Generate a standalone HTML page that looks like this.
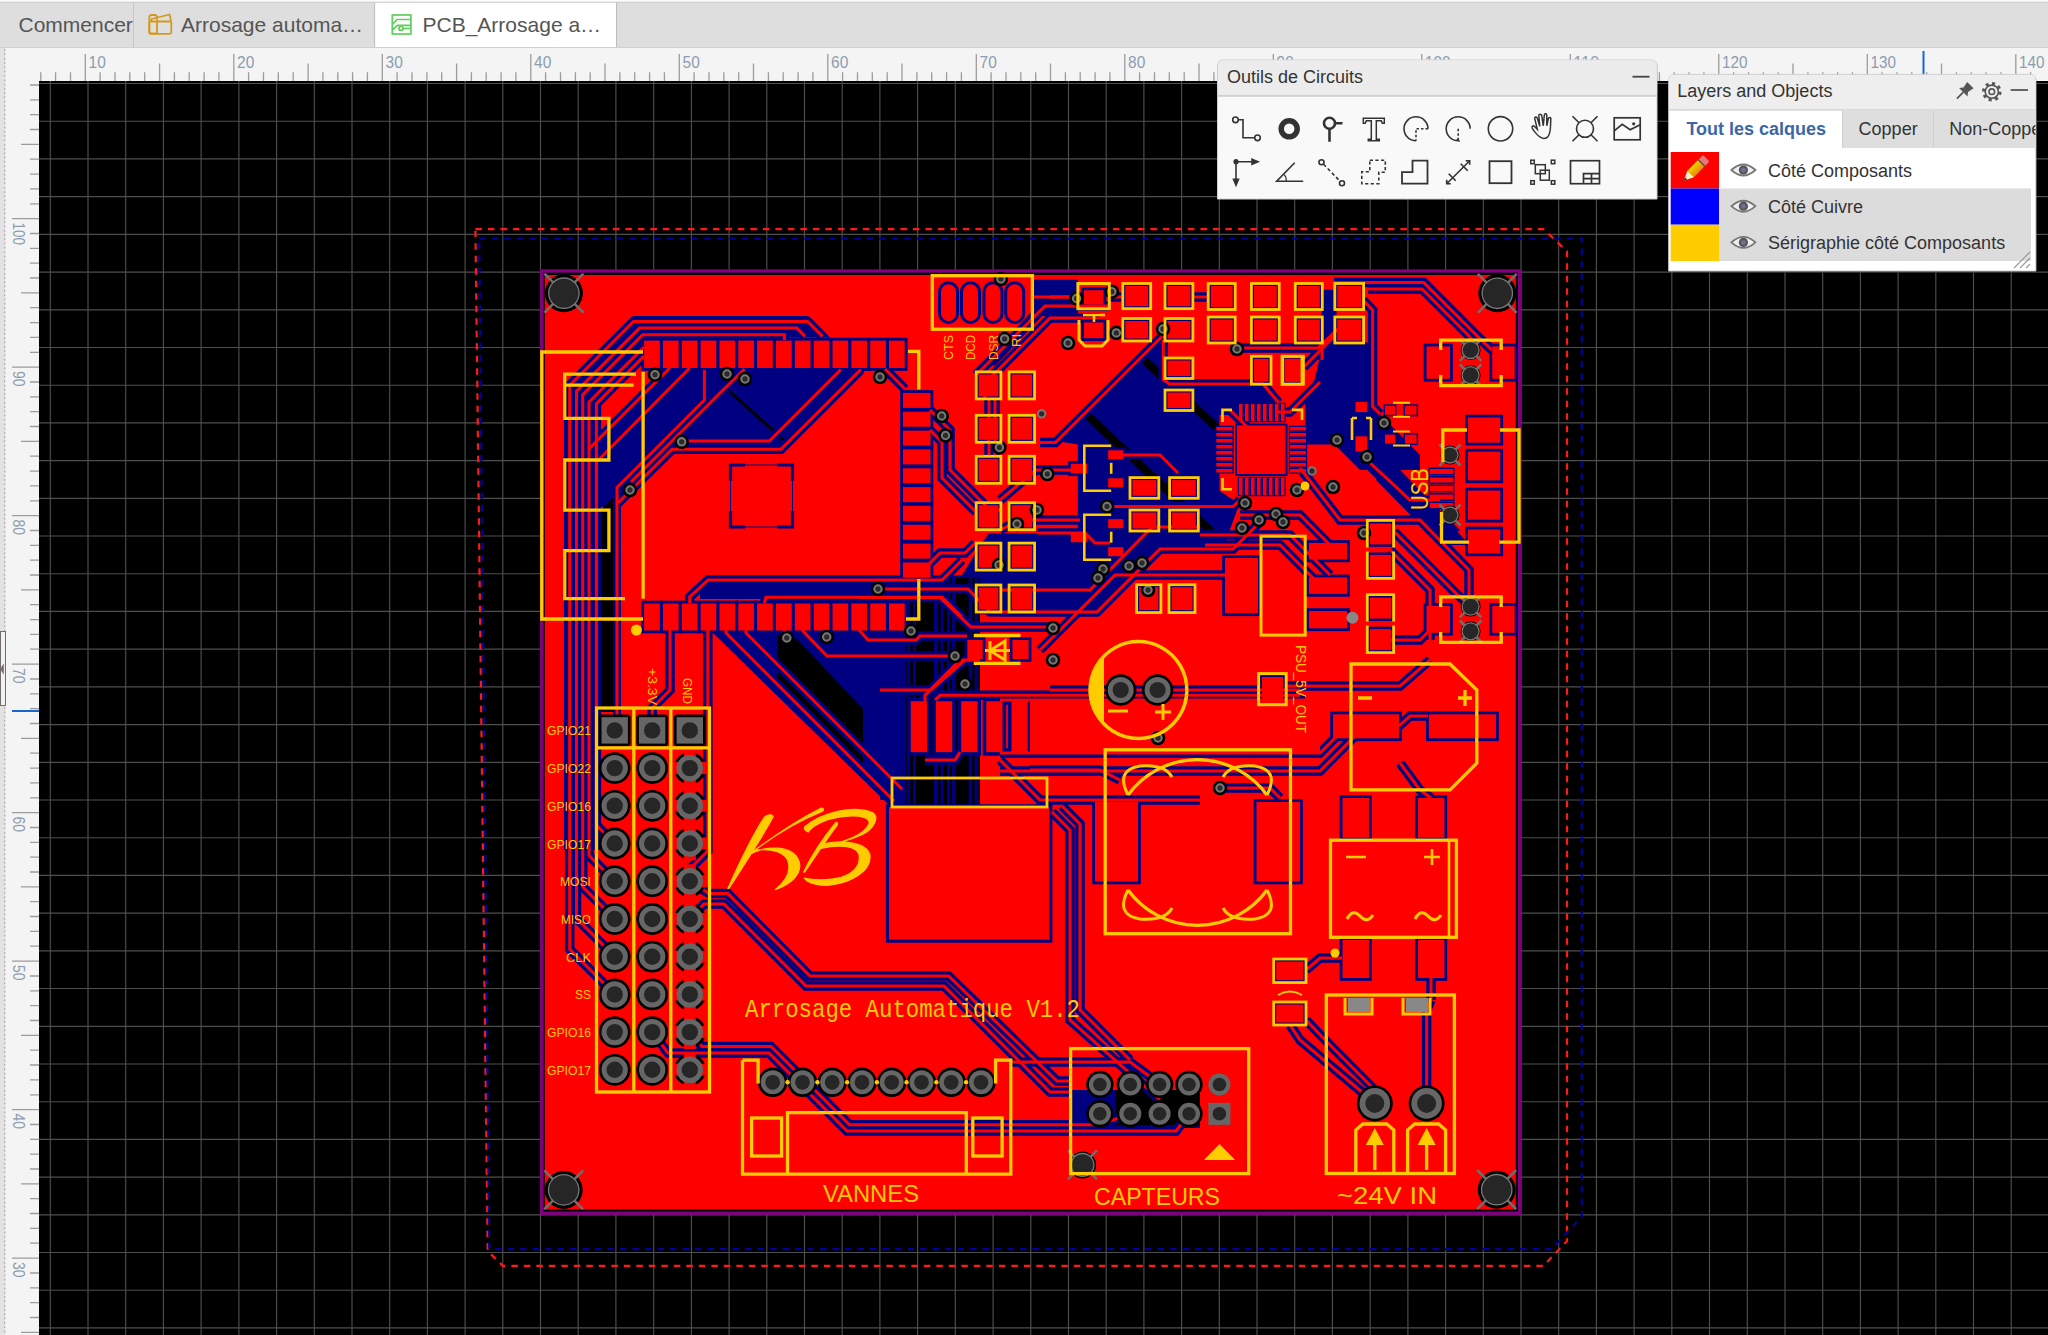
<!DOCTYPE html>
<html><head><meta charset="utf-8"><style>
*{margin:0;padding:0}
html,body{width:2048px;height:1335px;overflow:hidden;background:#f4f4f4}
svg{position:absolute;left:0;top:0;display:block}
</style></head><body>
<svg width="2048" height="1335" viewBox="0 0 2048 1335">
<rect x="39" y="81" width="2009" height="1254" fill="#000"/><path d="M50.3 81V1335M88 81V1335M125.7 81V1335M163.4 81V1335M201.1 81V1335M238.9 81V1335M276.6 81V1335M314.3 81V1335M352 81V1335M389.7 81V1335M427.4 81V1335M465.1 81V1335M502.8 81V1335M540.5 81V1335M578.2 81V1335M615.9 81V1335M653.7 81V1335M691.4 81V1335M729.1 81V1335M766.8 81V1335M804.5 81V1335M842.2 81V1335M879.9 81V1335M917.6 81V1335M955.3 81V1335M993.1 81V1335M1030.8 81V1335M1068.5 81V1335M1106.2 81V1335M1143.9 81V1335M1181.6 81V1335M1219.3 81V1335M1257 81V1335M1294.7 81V1335M1332.4 81V1335M1370.2 81V1335M1407.9 81V1335M1445.6 81V1335M1483.3 81V1335M1521 81V1335M1558.7 81V1335M1596.4 81V1335M1634.1 81V1335M1671.8 81V1335M1709.5 81V1335M1747.3 81V1335M1785 81V1335M1822.7 81V1335M1860.4 81V1335M1898.1 81V1335M1935.8 81V1335M1973.5 81V1335M2011.2 81V1335M39 83.5H2048M39 121.2H2048M39 158.9H2048M39 196.6H2048M39 234.3H2048M39 272.1H2048M39 309.8H2048M39 347.5H2048M39 385.2H2048M39 422.9H2048M39 460.6H2048M39 498.3H2048M39 536H2048M39 573.7H2048M39 611.4H2048M39 649.1H2048M39 686.9H2048M39 724.6H2048M39 762.3H2048M39 800H2048M39 837.7H2048M39 875.4H2048M39 913.1H2048M39 950.8H2048M39 988.5H2048M39 1026.3H2048M39 1064H2048M39 1101.7H2048M39 1139.4H2048M39 1177.1H2048M39 1214.8H2048M39 1252.5H2048M39 1290.2H2048M39 1327.9H2048" stroke="#4e4e4e" stroke-width="1.15" fill="none"/><path d="M475.4 229.1H1543.5L1567 251.3V1241L1543.4 1265.9H502.9L487.7 1251.2Z" stroke="#ff1a1a" stroke-width="2.2" fill="none" stroke-dasharray="6.5 6"/><path d="M479.2 238.6H1581.8V1216.6L1551.5 1249.1H489.3Z" stroke="#00009a" stroke-width="2.2" fill="none" stroke-dasharray="6.5 6"/><rect x="541.7" y="271" width="977.9" height="942.2" fill="#000" stroke="#800080" stroke-width="3.3"/><rect x="544.8" y="275" width="971" height="934.5" fill="#ff0000"/><polygon points="633,316 808,316 830,337.5 641,337.5 641,345 588,398 588,850 563.9,850 563.9,388" fill="#000080"/><polygon points="662,369.6 866,369.6 781,453 672,453 618,507 600,507 600,850 585,850 585,447" fill="#000080"/><polygon points="700,581 882,581 882,599 700,599" fill="#000080"/><polygon points="1032,282 1078,282 1078,302 1032,302" fill="#000080"/><polygon points="1161.5,337.1 1161.5,383.9 1263,383.9 1275.5,398.4 1275.5,414.9 1219.5,414.9 1219.5,490.7 1239.3,503.9 1226.1,540.2 1236,546.8 1163.5,546.8 1097.5,614.3 945.9,614.3 939.3,576.4 959.1,573.1 988.8,533.6 1077.8,533.6 1077.8,444.6 1058,441.3" fill="#000080"/><polygon points="1320,342.4 1323.3,289.7 1336.5,289.7 1336.5,342.4 1374.4,342.4 1374.4,444.6 1460.1,530.3 1440.4,540.2 1357.9,461.1 1341.5,444.6 1305.2,444.6 1305.2,398.4 1320,368.8" fill="#000080"/><polygon points="1033.3,279.8 1077.8,279.8 1077.8,306.1 1051.4,306.1 995.4,365.5 985.5,365.5 988.8,358.9 1033.3,309.4" fill="#000080"/><polygon points="1040,283 1078,283 1078,316 1040,316" fill="#000080"/><polygon points="1323,343 1376,343 1376,410 1420,455 1420,470 1360,470 1320,430 1310,400" fill="#000080"/><polygon points="1376,450 1400,470 1470,545 1440,545 1376,480" fill="#000080"/><polygon points="880,596 907,596 907,800 880,800" fill="#000080"/><polygon points="713,633 906,633 906,808 890.4,806.5" fill="#000080"/><polygon points="1072,1090 1200,1090 1200,1128 1072,1128" fill="#000080"/><polygon points="598.5,512 614,497 614,712 598.5,712" fill="#000"/><path d="M728 390L788 444" stroke="#000" stroke-width="3"/><polygon points="1137.1,358.9 1143.7,353.9 1219.5,424.8 1212.9,429.8" fill="#000"/><polygon points="1084.4,418.2 1091,413.3 1219.5,533.6 1212.9,538.5" fill="#000"/><polygon points="906,578 980,578 980,808 906,808" fill="#000"/><path d="M908.5 578V808" stroke="#000080" stroke-width="3.5"/><path d="M914.5 578V808" stroke="#000080" stroke-width="3"/><path d="M936 578V808" stroke="#000080" stroke-width="4"/><path d="M942 578V808" stroke="#000080" stroke-width="3"/><path d="M948.5 578V808" stroke="#000080" stroke-width="3"/><path d="M953.5 578V808" stroke="#000080" stroke-width="3"/><path d="M970.5 578V808" stroke="#000080" stroke-width="3.5"/><path d="M976.5 578V808" stroke="#000080" stroke-width="3.5"/><polygon points="777.4,635 796.9,639 863,709 863,771.4 777.4,685.7" fill="#000"/><polygon points="1115,1090 1200,1090 1200,1125 1115,1125" fill="#000"/><polyline points="735,910 812,987 940,987" fill="none" stroke="#000" stroke-width="3"/><polygon points="933,540 975,540 990,530 962,575 933,577" fill="#ff0000"/><g fill="#000080" stroke="#000080"><polyline points="614.7,994.3 569.7,949.3 569.7,385.3 633.5,321.5 807.6,321.5 822.5,336.4" fill="none" stroke-width="9.5"/><polyline points="614.7,956.6 576.5,918.4 576.5,391.1 639.5,328.1 796.8,328.1 805,336.4" fill="none" stroke-width="9.5"/><polyline points="614.7,918.9 582.7,886.9 582.7,394.6 642.6,334.7 784.4,334.7 784.4,340" fill="none" stroke-width="9.5"/><polyline points="614.7,881.2 589,855.5 589,402 644,347" fill="none" stroke-width="9.5"/><polyline points="614.7,843.5 596.4,825.2 596.4,403.6 644,356" fill="none" stroke-width="9.5"/><polyline points="669.8,368 590,447.8 589,449" fill="none" stroke-width="9.5"/><polyline points="689.7,368 596.4,462 596.4,470" fill="none" stroke-width="9.5"/><polyline points="704.4,370 704.4,400 617,487.5 617,716 614.7,730.4" fill="none" stroke-width="8"/><rect x="641.3" y="337.8" width="21.3" height="33" stroke="none"/><rect x="641.3" y="600.7" width="21.3" height="32.6" stroke="none"/><rect x="660.1" y="337.8" width="21.3" height="33" stroke="none"/><rect x="660.1" y="600.7" width="21.3" height="32.6" stroke="none"/><rect x="679" y="337.8" width="21.3" height="33" stroke="none"/><rect x="679" y="600.7" width="21.3" height="32.6" stroke="none"/><rect x="697.8" y="337.8" width="21.3" height="33" stroke="none"/><rect x="697.8" y="600.7" width="21.3" height="32.6" stroke="none"/><rect x="716.7" y="337.8" width="21.3" height="33" stroke="none"/><rect x="716.7" y="600.7" width="21.3" height="32.6" stroke="none"/><rect x="735.5" y="337.8" width="21.3" height="33" stroke="none"/><rect x="735.5" y="600.7" width="21.3" height="32.6" stroke="none"/><rect x="754.3" y="337.8" width="21.3" height="33" stroke="none"/><rect x="754.3" y="600.7" width="21.3" height="32.6" stroke="none"/><rect x="773.2" y="337.8" width="21.3" height="33" stroke="none"/><rect x="773.2" y="600.7" width="21.3" height="32.6" stroke="none"/><rect x="792" y="337.8" width="21.3" height="33" stroke="none"/><rect x="792" y="600.7" width="21.3" height="32.6" stroke="none"/><rect x="810.9" y="337.8" width="21.3" height="33" stroke="none"/><rect x="810.9" y="600.7" width="21.3" height="32.6" stroke="none"/><rect x="829.7" y="337.8" width="21.3" height="33" stroke="none"/><rect x="829.7" y="600.7" width="21.3" height="32.6" stroke="none"/><rect x="848.5" y="337.8" width="21.3" height="33" stroke="none"/><rect x="848.5" y="600.7" width="21.3" height="32.6" stroke="none"/><rect x="867.4" y="337.8" width="21.3" height="33" stroke="none"/><rect x="867.4" y="600.7" width="21.3" height="32.6" stroke="none"/><rect x="886.2" y="337.8" width="21.3" height="33" stroke="none"/><rect x="886.2" y="600.7" width="21.3" height="32.6" stroke="none"/><rect x="900.2" y="390.1" width="33.1" height="20.6" stroke="none"/><rect x="900.2" y="408.9" width="33.1" height="20.6" stroke="none"/><rect x="900.2" y="427.8" width="33.1" height="20.6" stroke="none"/><rect x="900.2" y="446.6" width="33.1" height="20.6" stroke="none"/><rect x="900.2" y="465.5" width="33.1" height="20.6" stroke="none"/><rect x="900.2" y="484.3" width="33.1" height="20.6" stroke="none"/><rect x="900.2" y="503.1" width="33.1" height="20.6" stroke="none"/><rect x="900.2" y="522" width="33.1" height="20.6" stroke="none"/><rect x="900.2" y="540.8" width="33.1" height="20.6" stroke="none"/><rect x="900.2" y="559.7" width="33.1" height="20.6" stroke="none"/><polyline points="744.5,369 720,393 631,482" fill="none" stroke-width="9.5"/><polyline points="840.8,369.6 769.4,441 682,441" fill="none" stroke-width="9.5"/><polyline points="860.7,369.6 781,449.3 672,449.3 618,503" fill="none" stroke-width="9.5"/><polyline points="885,369 905,389" fill="none" stroke-width="9.5"/><path d="M730.5 481V465H745M777 465H792.5V481M792.5 511V527H777M745 527H730.5V511" fill="none" stroke-width="3.2"/><path d="M730.5 465V527M792.5 465V527M730.5 465H792.5M730.5 527H792.5" fill="none" stroke-width="1"/><polyline points="670,630 670,690 652.2,708 652.2,730.4" fill="none" stroke-width="9.5"/><polyline points="707.8,630 707.8,851 689.8,869 689.8,881.2" fill="none" stroke-width="9.5"/><polyline points="689.7,603 689.7,597 708,580 942,580 962,560" fill="none" stroke-width="9.5"/><polyline points="764.4,603 766,597.3 942,597.3 962,617" fill="none" stroke-width="9.5"/><rect x="938.0" y="281.2" width="21" height="42.7" rx="10.5" stroke="none"/><rect x="960.0" y="281.2" width="21" height="42.7" rx="10.5" stroke="none"/><rect x="982.5" y="281.2" width="21" height="42.7" rx="10.5" stroke="none"/><rect x="1004.2" y="281.2" width="21" height="42.7" rx="10.5" stroke="none"/><polyline points="1032,297 1060,297 1078,297" fill="none" stroke-width="9.5"/><polyline points="1100,318 1050,318 985,383 985,400" fill="none" stroke-width="9.5"/><polyline points="1110,306 1045,306 976,375" fill="none" stroke-width="9.5"/><rect x="976.5" y="372.2" width="24.1" height="26.4" stroke="none"/><rect x="1009.4" y="372.2" width="24.9" height="26.4" stroke="none"/><rect x="976.5" y="415.6" width="24.1" height="26.4" stroke="none"/><rect x="1009.4" y="415.6" width="24.9" height="26.4" stroke="none"/><rect x="976.5" y="456.6" width="24.1" height="26.4" stroke="none"/><rect x="1009.4" y="456.6" width="24.9" height="26.4" stroke="none"/><rect x="976.5" y="503" width="24.1" height="26.4" stroke="none"/><rect x="1009.4" y="503" width="24.9" height="26.4" stroke="none"/><rect x="976.5" y="543.4" width="24.1" height="26.4" stroke="none"/><rect x="1009.4" y="543.4" width="24.9" height="26.4" stroke="none"/><rect x="976.5" y="585.3" width="24.1" height="26.4" stroke="none"/><rect x="1009.4" y="585.3" width="24.9" height="26.4" stroke="none"/><polyline points="989,399 989,456" fill="none" stroke-width="9.5"/><polyline points="995,399 995,456" fill="none" stroke-width="9.5"/><polyline points="930,410 950,430 950,470 990,510 1000,510" fill="none" stroke-width="9.5"/><polyline points="930,430 942,442 942,478 976,512" fill="none" stroke-width="9.5"/><polyline points="918,575 940,553 965,553 975,543" fill="none" stroke-width="9.5"/><polyline points="1161.5,337 1055.4,442.6 1040,442.6" fill="none" stroke-width="9.5"/><polyline points="1163.3,340 1163.3,379.4 1169.4,384 1263,384 1278.6,402.8" fill="none" stroke-width="9.5"/><polyline points="1000,500 1036,470 1080,470" fill="none" stroke-width="9.5"/><polyline points="1000,530 1020,520 1080,520" fill="none" stroke-width="9.5"/><polyline points="1037,533 1085,533 1095,543 1110,543" fill="none" stroke-width="9.5"/><polyline points="1123,455 1160,455 1178,473" fill="none" stroke-width="9.5"/><polyline points="1107,506.5 1233,506.5 1240,500" fill="none" stroke-width="9.5"/><polyline points="1000,612 1097,612 1160,549 1233,549 1260,522" fill="none" stroke-width="9.5"/><polyline points="1000,590 1090,590 1152,527 1200,527" fill="none" stroke-width="9.5"/><polyline points="1052,627 971,627 940,597.6 860,597.6" fill="none" stroke-width="9.5"/><polyline points="878,589 968,589 990,611.7 1000,612" fill="none" stroke-width="9.5"/><polyline points="1040,650 1115,575 1230,575 1240,565 1258,565" fill="none" stroke-width="9.5"/><rect x="1068" y="461" width="22.1" height="15.1" stroke="none"/><rect x="1105.4" y="447.5" width="20.6" height="14.6" stroke="none"/><rect x="1105.4" y="475.5" width="20.6" height="14.6" stroke="none"/><rect x="1068" y="529.9" width="22.1" height="15.1" stroke="none"/><rect x="1105.4" y="516.4" width="20.6" height="14.6" stroke="none"/><rect x="1105.4" y="544.4" width="20.6" height="14.6" stroke="none"/><rect x="1130.3" y="477.9" width="28.2" height="20.1" stroke="none"/><rect x="1169.9" y="477.9" width="28.1" height="20.1" stroke="none"/><rect x="1130.3" y="510.3" width="28.2" height="20.4" stroke="none"/><rect x="1169.9" y="510.3" width="28.1" height="20.4" stroke="none"/><rect x="1136.9" y="585" width="23.7" height="27.3" stroke="none"/><rect x="1169.3" y="585" width="25.4" height="27.3" stroke="none"/><rect x="1235" y="423.5" width="52.5" height="52.5" stroke="none"/><rect x="1237.8" y="402.8" width="5.9" height="19.4" stroke="none"/><rect x="1237.8" y="476.8" width="5.9" height="19.4" stroke="none"/><rect x="1215.1" y="425.8" width="18.6" height="5.9" stroke="none"/><rect x="1288.8" y="425.8" width="18.4" height="5.9" stroke="none"/><rect x="1243.8" y="402.8" width="5.9" height="19.4" stroke="none"/><rect x="1243.8" y="476.8" width="5.9" height="19.4" stroke="none"/><rect x="1215.1" y="431.8" width="18.6" height="5.9" stroke="none"/><rect x="1288.8" y="431.8" width="18.4" height="5.9" stroke="none"/><rect x="1249.8" y="402.8" width="5.9" height="19.4" stroke="none"/><rect x="1249.8" y="476.8" width="5.9" height="19.4" stroke="none"/><rect x="1215.1" y="437.8" width="18.6" height="5.9" stroke="none"/><rect x="1288.8" y="437.8" width="18.4" height="5.9" stroke="none"/><rect x="1255.8" y="402.8" width="5.9" height="19.4" stroke="none"/><rect x="1255.8" y="476.8" width="5.9" height="19.4" stroke="none"/><rect x="1215.1" y="443.8" width="18.6" height="5.9" stroke="none"/><rect x="1288.8" y="443.8" width="18.4" height="5.9" stroke="none"/><rect x="1261.8" y="402.8" width="5.9" height="19.4" stroke="none"/><rect x="1261.8" y="476.8" width="5.9" height="19.4" stroke="none"/><rect x="1215.1" y="449.8" width="18.6" height="5.9" stroke="none"/><rect x="1288.8" y="449.8" width="18.4" height="5.9" stroke="none"/><rect x="1267.8" y="402.8" width="5.9" height="19.4" stroke="none"/><rect x="1267.8" y="476.8" width="5.9" height="19.4" stroke="none"/><rect x="1215.1" y="455.8" width="18.6" height="5.9" stroke="none"/><rect x="1288.8" y="455.8" width="18.4" height="5.9" stroke="none"/><rect x="1273.8" y="402.8" width="5.9" height="19.4" stroke="none"/><rect x="1273.8" y="476.8" width="5.9" height="19.4" stroke="none"/><rect x="1215.1" y="461.8" width="18.6" height="5.9" stroke="none"/><rect x="1288.8" y="461.8" width="18.4" height="5.9" stroke="none"/><rect x="1279.8" y="402.8" width="5.9" height="19.4" stroke="none"/><rect x="1279.8" y="476.8" width="5.9" height="19.4" stroke="none"/><rect x="1215.1" y="467.8" width="18.6" height="5.9" stroke="none"/><rect x="1288.8" y="467.8" width="18.4" height="5.9" stroke="none"/><rect x="1081.2" y="287.4" width="25.1" height="19.9" stroke="none"/><rect x="1081.2" y="319.6" width="25.1" height="21.4" stroke="none"/><rect x="1123.1" y="283.8" width="27.3" height="24.6" stroke="none"/><rect x="1123.1" y="318.8" width="27.3" height="21.9" stroke="none"/><rect x="1165.3" y="283.8" width="27.3" height="24.6" stroke="none"/><rect x="1165.3" y="318.8" width="27.3" height="21.9" stroke="none"/><rect x="1208.5" y="283.8" width="26.4" height="25.4" stroke="none"/><rect x="1208.5" y="317.3" width="26.4" height="25.4" stroke="none"/><rect x="1251.7" y="283.8" width="27.2" height="25.4" stroke="none"/><rect x="1251.7" y="317.3" width="27.2" height="25.4" stroke="none"/><rect x="1295.6" y="283.8" width="26.4" height="25.4" stroke="none"/><rect x="1295.6" y="317.3" width="26.4" height="25.4" stroke="none"/><rect x="1335.1" y="283.8" width="28.2" height="25.4" stroke="none"/><rect x="1335.1" y="317.3" width="28.2" height="25.4" stroke="none"/><rect x="1165.3" y="358.3" width="27.3" height="19.9" stroke="none"/><rect x="1165.3" y="390.3" width="27.3" height="19.9" stroke="none"/><rect x="1251.7" y="356.6" width="19" height="27.3" stroke="none"/><rect x="1282.3" y="356.6" width="19.4" height="27.3" stroke="none"/><rect x="1283" y="356.6" width="20.1" height="27.3" stroke="none"/><polyline points="1050,297 1078,297" fill="none" stroke-width="9.5"/><polyline points="1109,297 1122,297" fill="none" stroke-width="9.5"/><polyline points="1193,297 1208,297" fill="none" stroke-width="9.5"/><polyline points="1334,282.6 1423.8,282.6 1479.6,338.3 1492,350" fill="none" stroke-width="9.5"/><polyline points="1368,289 1422,289 1470,337" fill="none" stroke-width="9.5"/><polyline points="1363,300 1372.6,310 1372.6,406.6 1380,414" fill="none" stroke-width="9.5"/><polyline points="1237.3,348.1 1317.8,348.1 1335,332" fill="none" stroke-width="9.5"/><polyline points="1303.8,367 1335,335.6" fill="none" stroke-width="9.5"/><polyline points="1322,360 1322,345 1340,327" fill="none" stroke-width="9.5"/><polyline points="1320,382 1290,412 1275,412" fill="none" stroke-width="9.5"/><polyline points="1230,410 1260,440" fill="none" stroke-width="9.5"/><rect x="1423.7" y="343.6" width="29.1" height="38" stroke="none"/><rect x="1489.4" y="343.6" width="28.1" height="38" stroke="none"/><rect x="1423.7" y="603" width="29.1" height="32.6" stroke="none"/><rect x="1489.4" y="603" width="28.1" height="32.6" stroke="none"/><rect x="1465.2" y="414.7" width="37.9" height="30.8" stroke="none"/><rect x="1465.2" y="448.8" width="37.9" height="34.4" stroke="none"/><rect x="1465.2" y="487.7" width="37.9" height="34.8" stroke="none"/><rect x="1465.2" y="526.6" width="37.9" height="29.6" stroke="none"/><rect x="1428.5" y="467.5" width="26" height="8" stroke="none"/><rect x="1428.5" y="476" width="26" height="8" stroke="none"/><rect x="1428.5" y="484.5" width="26" height="8" stroke="none"/><rect x="1428.5" y="493" width="26" height="8" stroke="none"/><rect x="1428.5" y="501.5" width="26" height="8" stroke="none"/><rect x="1383.5" y="404.3" width="13" height="12" stroke="none"/><rect x="1403.5" y="404.3" width="14.6" height="12" stroke="none"/><rect x="1383.5" y="433.1" width="13" height="12" stroke="none"/><rect x="1403.5" y="433.1" width="14.6" height="12" stroke="none"/><rect x="1352.7" y="399.2" width="17.3" height="15.6" stroke="none"/><rect x="1352.7" y="433.5" width="17.3" height="20.9" stroke="none"/><polyline points="1300,468 1340,520 1420,520 1469,570 1469,605" fill="none" stroke-width="9.5"/><polyline points="1394.3,531.7 1455.7,593.1 1470,606" fill="none" stroke-width="9.5"/><polyline points="1390,550 1430,590 1430,640" fill="none" stroke-width="9.5"/><polyline points="1390,640 1420,640 1440,620" fill="none" stroke-width="9.5"/><polyline points="1367,460 1410,500 1440,500" fill="none" stroke-width="9.5"/><rect x="1306.1" y="540.1" width="43.8" height="22.1" stroke="none"/><rect x="1306.1" y="574.6" width="43.8" height="22.1" stroke="none"/><rect x="1306.1" y="608.2" width="43.8" height="22.9" stroke="none"/><rect x="1222.2" y="555.1" width="38.6" height="61" stroke="none"/><rect x="1367.6" y="521" width="25.8" height="25.8" stroke="none"/><rect x="1367.6" y="552.5" width="25.8" height="25.8" stroke="none"/><rect x="1367.6" y="595.2" width="25.8" height="25.8" stroke="none"/><rect x="1367.6" y="626.7" width="25.8" height="25.8" stroke="none"/><polyline points="1240,515 1300,515 1330,545" fill="none" stroke-width="9.5"/><polyline points="1200,535 1290,535 1330,575" fill="none" stroke-width="9.5"/><polyline points="1205,545 1280,545 1320,585" fill="none" stroke-width="9.5"/><rect x="964.6" y="637.2" width="20.9" height="24.6" stroke="none"/><rect x="1009.6" y="637.2" width="21.8" height="24.6" stroke="none"/><polyline points="859,630 868,640 916,640 920,636 967,636" fill="none" stroke-width="9.5"/><polyline points="802,630 827,656 957,656" fill="none" stroke-width="9.5"/><polyline points="784,630 787,638" fill="none" stroke-width="9.5"/><polyline points="880,690 930,690 960,660 980,660" fill="none" stroke-width="9.5"/><polyline points="925,702 925,695 965,660" fill="none" stroke-width="9.5"/><rect x="907.2" y="697.6" width="23.4" height="58.1" stroke="none"/><rect x="932.4" y="697.6" width="23.4" height="58.1" stroke="none"/><rect x="957.6" y="697.6" width="23.4" height="58.1" stroke="none"/><rect x="982.7" y="697.6" width="23.4" height="58.1" stroke="none"/><rect x="1007.9" y="697.6" width="23.4" height="58.1" stroke="none"/><rect x="1030" y="701.2" width="290" height="50.9" stroke="none"/><polyline points="935,700 940,695.3 1300,695.3" fill="none" stroke-width="9.5"/><polyline points="925,760 955,760 960,752" fill="none" stroke-width="9.5"/><polyline points="1000,760 1040,800 1200,800" fill="none" stroke-width="9.5"/><polyline points="1030,770 1100,770 1120,780" fill="none" stroke-width="9.5"/><rect x="885.9" y="804.2" width="166.5" height="138.5" stroke="none"/><polyline points="1052,812 1070,830 1070,1020 1160,1100" fill="none" stroke-width="9.5"/><polyline points="1062,806 1080,824 1080,1010 1130,1060" fill="none" stroke-width="9.5"/><polyline points="726,630 726,633 894,801" fill="none" stroke-width="9.5"/><polyline points="746,630 746,633 902,789" fill="none" stroke-width="9.5"/><polyline points="1050,690 1260,690 1300,690" fill="none" stroke-width="9.5"/><polyline points="1000,700 1305,700" fill="none" stroke-width="9.5"/><rect x="1259.2" y="674.2" width="26.6" height="30.6" stroke="none"/><polyline points="1286,686 1400,686 1430,660" fill="none" stroke-width="9.5"/><rect x="1092.2" y="799.2" width="48.6" height="85.1" stroke="none"/><rect x="1253.7" y="799.2" width="49.1" height="85.1" stroke="none"/><polyline points="1000,753 1320,753 1350,723" fill="none" stroke-width="9.5"/><polyline points="1000,771 1320,771 1360,731" fill="none" stroke-width="9.5"/><polyline points="1220,788 1270,788 1280,798" fill="none" stroke-width="9.5"/><rect x="1330.2" y="711.5" width="71.6" height="29.6" stroke="none"/><rect x="1426" y="711.5" width="72.8" height="29.6" stroke="none"/><polyline points="1399,726 1410,716 1428,716" fill="none" stroke-width="9.5"/><rect x="1339.7" y="795.2" width="32.1" height="45.4" stroke="none"/><rect x="1415.2" y="795.2" width="32" height="45.4" stroke="none"/><rect x="1339.7" y="937.2" width="32.1" height="43.6" stroke="none"/><rect x="1415.2" y="937.2" width="32" height="43.6" stroke="none"/><polyline points="1400,763 1420,790 1431,798" fill="none" stroke-width="9.5"/><rect x="1274" y="959.3" width="31.7" height="23" stroke="none"/><rect x="1274" y="1002.3" width="31.7" height="22.4" stroke="none"/><polyline points="1306,970 1320,958 1342,958" fill="none" stroke-width="9.5"/><polyline points="1290,1025 1300,1040 1375,1103" fill="none" stroke-width="9.5"/><polyline points="1431,978 1431,1000" fill="none" stroke-width="9.5"/><polyline points="1306,1020 1330,1045 1374.8,1090" fill="none" stroke-width="9.5"/><polyline points="1426.6,1090 1426.6,1010 1431,1000" fill="none" stroke-width="9.5"/><polyline points="689.8,881.2 709,893.6 727.8,893.6 810,976 948.6,976 1057,1081 1072,1081" fill="none" stroke-width="9.5"/><polyline points="689.8,918.9 704,904 724,904 806,986 944,986 1050,1092 1072,1092" fill="none" stroke-width="9.5"/><polyline points="689.8,1032 702,1046.5 771,1046.5 849.4,1124.7 1100,1124.7 1130,1113.8" fill="none" stroke-width="9.5"/><polyline points="652.2,1032 668,1053 769,1053 847,1131 1176,1131 1189,1113.8" fill="none" stroke-width="9.5"/><polyline points="1012,1062 1130,1062 1160,1084" fill="none" stroke-width="9.5"/></g><g fill="#ff0000" stroke="#ff0000"><polyline points="614.7,994.3 569.7,949.3 569.7,385.3 633.5,321.5 807.6,321.5 822.5,336.4" fill="none" stroke-width="3.0"/><polyline points="614.7,956.6 576.5,918.4 576.5,391.1 639.5,328.1 796.8,328.1 805,336.4" fill="none" stroke-width="3.0"/><polyline points="614.7,918.9 582.7,886.9 582.7,394.6 642.6,334.7 784.4,334.7 784.4,340" fill="none" stroke-width="3.0"/><polyline points="614.7,881.2 589,855.5 589,402 644,347" fill="none" stroke-width="3.0"/><polyline points="614.7,843.5 596.4,825.2 596.4,403.6 644,356" fill="none" stroke-width="3.0"/><polyline points="669.8,368 590,447.8 589,449" fill="none" stroke-width="3.0"/><polyline points="689.7,368 596.4,462 596.4,470" fill="none" stroke-width="3.0"/><polyline points="704.4,370 704.4,400 617,487.5 617,716 614.7,730.4" fill="none" stroke-width="3.0"/><rect x="644.1" y="340.6" width="15.7" height="27.4" stroke="none"/><rect x="644.1" y="603.5" width="15.7" height="27" stroke="none"/><rect x="662.9" y="340.6" width="15.7" height="27.4" stroke="none"/><rect x="662.9" y="603.5" width="15.7" height="27" stroke="none"/><rect x="681.8" y="340.6" width="15.7" height="27.4" stroke="none"/><rect x="681.8" y="603.5" width="15.7" height="27" stroke="none"/><rect x="700.6" y="340.6" width="15.7" height="27.4" stroke="none"/><rect x="700.6" y="603.5" width="15.7" height="27" stroke="none"/><rect x="719.5" y="340.6" width="15.7" height="27.4" stroke="none"/><rect x="719.5" y="603.5" width="15.7" height="27" stroke="none"/><rect x="738.3" y="340.6" width="15.7" height="27.4" stroke="none"/><rect x="738.3" y="603.5" width="15.7" height="27" stroke="none"/><rect x="757.1" y="340.6" width="15.7" height="27.4" stroke="none"/><rect x="757.1" y="603.5" width="15.7" height="27" stroke="none"/><rect x="776" y="340.6" width="15.7" height="27.4" stroke="none"/><rect x="776" y="603.5" width="15.7" height="27" stroke="none"/><rect x="794.8" y="340.6" width="15.7" height="27.4" stroke="none"/><rect x="794.8" y="603.5" width="15.7" height="27" stroke="none"/><rect x="813.7" y="340.6" width="15.7" height="27.4" stroke="none"/><rect x="813.7" y="603.5" width="15.7" height="27" stroke="none"/><rect x="832.5" y="340.6" width="15.7" height="27.4" stroke="none"/><rect x="832.5" y="603.5" width="15.7" height="27" stroke="none"/><rect x="851.3" y="340.6" width="15.7" height="27.4" stroke="none"/><rect x="851.3" y="603.5" width="15.7" height="27" stroke="none"/><rect x="870.2" y="340.6" width="15.7" height="27.4" stroke="none"/><rect x="870.2" y="603.5" width="15.7" height="27" stroke="none"/><rect x="889" y="340.6" width="15.7" height="27.4" stroke="none"/><rect x="889" y="603.5" width="15.7" height="27" stroke="none"/><rect x="903" y="392.9" width="27.5" height="15" stroke="none"/><rect x="903" y="411.7" width="27.5" height="15" stroke="none"/><rect x="903" y="430.6" width="27.5" height="15" stroke="none"/><rect x="903" y="449.4" width="27.5" height="15" stroke="none"/><rect x="903" y="468.3" width="27.5" height="15" stroke="none"/><rect x="903" y="487.1" width="27.5" height="15" stroke="none"/><rect x="903" y="505.9" width="27.5" height="15" stroke="none"/><rect x="903" y="524.8" width="27.5" height="15" stroke="none"/><rect x="903" y="543.6" width="27.5" height="15" stroke="none"/><rect x="903" y="562.5" width="27.5" height="15" stroke="none"/><polyline points="744.5,369 720,393 631,482" fill="none" stroke-width="3.0"/><polyline points="840.8,369.6 769.4,441 682,441" fill="none" stroke-width="3.0"/><polyline points="860.7,369.6 781,449.3 672,449.3 618,503" fill="none" stroke-width="3.0"/><polyline points="885,369 905,389" fill="none" stroke-width="3.0"/><polyline points="670,630 670,690 652.2,708 652.2,730.4" fill="none" stroke-width="3.0"/><polyline points="707.8,630 707.8,851 689.8,869 689.8,881.2" fill="none" stroke-width="3.0"/><polyline points="689.7,603 689.7,597 708,580 942,580 962,560" fill="none" stroke-width="3.0"/><polyline points="764.4,603 766,597.3 942,597.3 962,617" fill="none" stroke-width="3.0"/><rect x="941.0" y="284.2" width="15" height="36.7" rx="7.5" stroke="none"/><rect x="963.0" y="284.2" width="15" height="36.7" rx="7.5" stroke="none"/><rect x="985.5" y="284.2" width="15" height="36.7" rx="7.5" stroke="none"/><rect x="1007.2" y="284.2" width="15" height="36.7" rx="7.5" stroke="none"/><polyline points="1032,297 1060,297 1078,297" fill="none" stroke-width="3.0"/><polyline points="1100,318 1050,318 985,383 985,400" fill="none" stroke-width="3.0"/><polyline points="1110,306 1045,306 976,375" fill="none" stroke-width="3.0"/><rect x="978.7" y="374.4" width="19.7" height="22" stroke="none"/><rect x="1011.6" y="374.4" width="20.5" height="22" stroke="none"/><rect x="978.7" y="417.8" width="19.7" height="22" stroke="none"/><rect x="1011.6" y="417.8" width="20.5" height="22" stroke="none"/><rect x="978.7" y="458.8" width="19.7" height="22" stroke="none"/><rect x="1011.6" y="458.8" width="20.5" height="22" stroke="none"/><rect x="978.7" y="505.2" width="19.7" height="22" stroke="none"/><rect x="1011.6" y="505.2" width="20.5" height="22" stroke="none"/><rect x="978.7" y="545.6" width="19.7" height="22" stroke="none"/><rect x="1011.6" y="545.6" width="20.5" height="22" stroke="none"/><rect x="978.7" y="587.5" width="19.7" height="22" stroke="none"/><rect x="1011.6" y="587.5" width="20.5" height="22" stroke="none"/><polyline points="989,399 989,456" fill="none" stroke-width="3.0"/><polyline points="995,399 995,456" fill="none" stroke-width="3.0"/><polyline points="930,410 950,430 950,470 990,510 1000,510" fill="none" stroke-width="3.0"/><polyline points="930,430 942,442 942,478 976,512" fill="none" stroke-width="3.0"/><polyline points="918,575 940,553 965,553 975,543" fill="none" stroke-width="3.0"/><polyline points="1161.5,337 1055.4,442.6 1040,442.6" fill="none" stroke-width="3.0"/><polyline points="1163.3,340 1163.3,379.4 1169.4,384 1263,384 1278.6,402.8" fill="none" stroke-width="3.0"/><polyline points="1000,500 1036,470 1080,470" fill="none" stroke-width="3.0"/><polyline points="1000,530 1020,520 1080,520" fill="none" stroke-width="3.0"/><polyline points="1037,533 1085,533 1095,543 1110,543" fill="none" stroke-width="3.0"/><polyline points="1123,455 1160,455 1178,473" fill="none" stroke-width="3.0"/><polyline points="1107,506.5 1233,506.5 1240,500" fill="none" stroke-width="3.0"/><polyline points="1000,612 1097,612 1160,549 1233,549 1260,522" fill="none" stroke-width="3.0"/><polyline points="1000,590 1090,590 1152,527 1200,527" fill="none" stroke-width="3.0"/><polyline points="1052,627 971,627 940,597.6 860,597.6" fill="none" stroke-width="3.0"/><polyline points="878,589 968,589 990,611.7 1000,612" fill="none" stroke-width="3.0"/><polyline points="1040,650 1115,575 1230,575 1240,565 1258,565" fill="none" stroke-width="3.0"/><rect x="1070.8" y="463.8" width="16.5" height="9.5" stroke="none"/><rect x="1108.2" y="450.3" width="15" height="9" stroke="none"/><rect x="1108.2" y="478.3" width="15" height="9" stroke="none"/><rect x="1070.8" y="532.7" width="16.5" height="9.5" stroke="none"/><rect x="1108.2" y="519.2" width="15" height="9" stroke="none"/><rect x="1108.2" y="547.2" width="15" height="9" stroke="none"/><rect x="1132.5" y="480.1" width="23.8" height="15.7" stroke="none"/><rect x="1172.1" y="480.1" width="23.7" height="15.7" stroke="none"/><rect x="1132.5" y="512.5" width="23.8" height="16" stroke="none"/><rect x="1172.1" y="512.5" width="23.7" height="16" stroke="none"/><rect x="1139.1" y="587.2" width="19.3" height="22.9" stroke="none"/><rect x="1171.5" y="587.2" width="21" height="22.9" stroke="none"/><rect x="1237" y="425.5" width="48.5" height="48.5" stroke="none"/><rect x="1239" y="404" width="3.5" height="17" stroke="none"/><rect x="1239" y="478" width="3.5" height="17" stroke="none"/><rect x="1216.3" y="427" width="16.2" height="3.5" stroke="none"/><rect x="1290" y="427" width="16" height="3.5" stroke="none"/><rect x="1245" y="404" width="3.5" height="17" stroke="none"/><rect x="1245" y="478" width="3.5" height="17" stroke="none"/><rect x="1216.3" y="433" width="16.2" height="3.5" stroke="none"/><rect x="1290" y="433" width="16" height="3.5" stroke="none"/><rect x="1251" y="404" width="3.5" height="17" stroke="none"/><rect x="1251" y="478" width="3.5" height="17" stroke="none"/><rect x="1216.3" y="439" width="16.2" height="3.5" stroke="none"/><rect x="1290" y="439" width="16" height="3.5" stroke="none"/><rect x="1257" y="404" width="3.5" height="17" stroke="none"/><rect x="1257" y="478" width="3.5" height="17" stroke="none"/><rect x="1216.3" y="445" width="16.2" height="3.5" stroke="none"/><rect x="1290" y="445" width="16" height="3.5" stroke="none"/><rect x="1263" y="404" width="3.5" height="17" stroke="none"/><rect x="1263" y="478" width="3.5" height="17" stroke="none"/><rect x="1216.3" y="451" width="16.2" height="3.5" stroke="none"/><rect x="1290" y="451" width="16" height="3.5" stroke="none"/><rect x="1269" y="404" width="3.5" height="17" stroke="none"/><rect x="1269" y="478" width="3.5" height="17" stroke="none"/><rect x="1216.3" y="457" width="16.2" height="3.5" stroke="none"/><rect x="1290" y="457" width="16" height="3.5" stroke="none"/><rect x="1275" y="404" width="3.5" height="17" stroke="none"/><rect x="1275" y="478" width="3.5" height="17" stroke="none"/><rect x="1216.3" y="463" width="16.2" height="3.5" stroke="none"/><rect x="1290" y="463" width="16" height="3.5" stroke="none"/><rect x="1281" y="404" width="3.5" height="17" stroke="none"/><rect x="1281" y="478" width="3.5" height="17" stroke="none"/><rect x="1216.3" y="469" width="16.2" height="3.5" stroke="none"/><rect x="1290" y="469" width="16" height="3.5" stroke="none"/><rect x="1084" y="290.2" width="19.5" height="14.3" stroke="none"/><rect x="1084" y="322.4" width="19.5" height="15.8" stroke="none"/><rect x="1125.3" y="286" width="22.9" height="20.2" stroke="none"/><rect x="1125.3" y="321" width="22.9" height="17.5" stroke="none"/><rect x="1167.5" y="286" width="22.9" height="20.2" stroke="none"/><rect x="1167.5" y="321" width="22.9" height="17.5" stroke="none"/><rect x="1210.7" y="286" width="22" height="21" stroke="none"/><rect x="1210.7" y="319.5" width="22" height="21" stroke="none"/><rect x="1253.9" y="286" width="22.8" height="21" stroke="none"/><rect x="1253.9" y="319.5" width="22.8" height="21" stroke="none"/><rect x="1297.8" y="286" width="22" height="21" stroke="none"/><rect x="1297.8" y="319.5" width="22" height="21" stroke="none"/><rect x="1337.3" y="286" width="23.8" height="21" stroke="none"/><rect x="1337.3" y="319.5" width="23.8" height="21" stroke="none"/><rect x="1167.5" y="360.5" width="22.9" height="15.5" stroke="none"/><rect x="1167.5" y="392.5" width="22.9" height="15.5" stroke="none"/><rect x="1253.9" y="358.8" width="14.6" height="22.9" stroke="none"/><rect x="1284.5" y="358.8" width="15" height="22.9" stroke="none"/><rect x="1285.2" y="358.8" width="15.7" height="22.9" stroke="none"/><polyline points="1050,297 1078,297" fill="none" stroke-width="3.0"/><polyline points="1109,297 1122,297" fill="none" stroke-width="3.0"/><polyline points="1193,297 1208,297" fill="none" stroke-width="3.0"/><polyline points="1334,282.6 1423.8,282.6 1479.6,338.3 1492,350" fill="none" stroke-width="3.0"/><polyline points="1368,289 1422,289 1470,337" fill="none" stroke-width="3.0"/><polyline points="1363,300 1372.6,310 1372.6,406.6 1380,414" fill="none" stroke-width="3.0"/><polyline points="1237.3,348.1 1317.8,348.1 1335,332" fill="none" stroke-width="3.0"/><polyline points="1303.8,367 1335,335.6" fill="none" stroke-width="3.0"/><polyline points="1322,360 1322,345 1340,327" fill="none" stroke-width="3.0"/><polyline points="1320,382 1290,412 1275,412" fill="none" stroke-width="3.0"/><polyline points="1230,410 1260,440" fill="none" stroke-width="3.0"/><rect x="1426.5" y="346.4" width="23.5" height="32.4" stroke="none"/><rect x="1492.2" y="346.4" width="22.5" height="32.4" stroke="none"/><rect x="1426.5" y="605.8" width="23.5" height="27" stroke="none"/><rect x="1492.2" y="605.8" width="22.5" height="27" stroke="none"/><rect x="1468" y="417.5" width="32.3" height="25.2" stroke="none"/><rect x="1468" y="451.6" width="32.3" height="28.8" stroke="none"/><rect x="1468" y="490.5" width="32.3" height="29.2" stroke="none"/><rect x="1468" y="529.4" width="32.3" height="24" stroke="none"/><rect x="1430" y="469" width="23" height="5" stroke="none"/><rect x="1430" y="477.5" width="23" height="5" stroke="none"/><rect x="1430" y="486" width="23" height="5" stroke="none"/><rect x="1430" y="494.5" width="23" height="5" stroke="none"/><rect x="1430" y="503" width="23" height="5" stroke="none"/><rect x="1385" y="405.8" width="10" height="9" stroke="none"/><rect x="1405" y="405.8" width="11.6" height="9" stroke="none"/><rect x="1385" y="434.6" width="10" height="9" stroke="none"/><rect x="1405" y="434.6" width="11.6" height="9" stroke="none"/><rect x="1355.5" y="402" width="11.7" height="10" stroke="none"/><rect x="1355.5" y="436.3" width="11.7" height="15.3" stroke="none"/><polyline points="1300,468 1340,520 1420,520 1469,570 1469,605" fill="none" stroke-width="3.0"/><polyline points="1394.3,531.7 1455.7,593.1 1470,606" fill="none" stroke-width="3.0"/><polyline points="1390,550 1430,590 1430,640" fill="none" stroke-width="3.0"/><polyline points="1390,640 1420,640 1440,620" fill="none" stroke-width="3.0"/><polyline points="1367,460 1410,500 1440,500" fill="none" stroke-width="3.0"/><rect x="1308.9" y="542.9" width="38.2" height="16.5" stroke="none"/><rect x="1308.9" y="577.4" width="38.2" height="16.5" stroke="none"/><rect x="1308.9" y="611" width="38.2" height="17.3" stroke="none"/><rect x="1225" y="557.9" width="33" height="55.4" stroke="none"/><rect x="1370" y="523.4" width="21" height="21" stroke="none"/><rect x="1370" y="554.9" width="21" height="21" stroke="none"/><rect x="1370" y="597.6" width="21" height="21" stroke="none"/><rect x="1370" y="629.1" width="21" height="21" stroke="none"/><polyline points="1240,515 1300,515 1330,545" fill="none" stroke-width="3.0"/><polyline points="1200,535 1290,535 1330,575" fill="none" stroke-width="3.0"/><polyline points="1205,545 1280,545 1320,585" fill="none" stroke-width="3.0"/><rect x="967.4" y="640" width="15.3" height="19" stroke="none"/><rect x="1012.4" y="640" width="16.2" height="19" stroke="none"/><polyline points="859,630 868,640 916,640 920,636 967,636" fill="none" stroke-width="3.0"/><polyline points="802,630 827,656 957,656" fill="none" stroke-width="3.0"/><polyline points="784,630 787,638" fill="none" stroke-width="3.0"/><polyline points="880,690 930,690 960,660 980,660" fill="none" stroke-width="3.0"/><polyline points="925,702 925,695 965,660" fill="none" stroke-width="3.0"/><rect x="910.8" y="701.2" width="16.2" height="50.9" stroke="none"/><rect x="936" y="701.2" width="16.2" height="50.9" stroke="none"/><rect x="961.2" y="701.2" width="16.2" height="50.9" stroke="none"/><rect x="986.3" y="701.2" width="16.2" height="50.9" stroke="none"/><rect x="1011.5" y="701.2" width="16.2" height="50.9" stroke="none"/><rect x="1030" y="701.2" width="290" height="50.9" stroke="none"/><polyline points="935,700 940,695.3 1300,695.3" fill="none" stroke-width="3.0"/><polyline points="925,760 955,760 960,752" fill="none" stroke-width="3.0"/><polyline points="1000,760 1040,800 1200,800" fill="none" stroke-width="3.0"/><polyline points="1030,770 1100,770 1120,780" fill="none" stroke-width="3.0"/><rect x="888.9" y="807.2" width="160.5" height="132.5" stroke="none"/><polyline points="1052,812 1070,830 1070,1020 1160,1100" fill="none" stroke-width="3.0"/><polyline points="1062,806 1080,824 1080,1010 1130,1060" fill="none" stroke-width="3.0"/><polyline points="726,630 726,633 894,801" fill="none" stroke-width="3.0"/><polyline points="746,630 746,633 902,789" fill="none" stroke-width="3.0"/><polyline points="1050,690 1260,690 1300,690" fill="none" stroke-width="3.0"/><polyline points="1000,700 1305,700" fill="none" stroke-width="3.0"/><rect x="1262" y="677" width="21" height="25" stroke="none"/><polyline points="1286,686 1400,686 1430,660" fill="none" stroke-width="3.0"/><rect x="1095" y="802" width="43" height="79.5" stroke="none"/><rect x="1256.5" y="802" width="43.5" height="79.5" stroke="none"/><polyline points="1000,753 1320,753 1350,723" fill="none" stroke-width="3.0"/><polyline points="1000,771 1320,771 1360,731" fill="none" stroke-width="3.0"/><polyline points="1220,788 1270,788 1280,798" fill="none" stroke-width="3.0"/><rect x="1333" y="714.3" width="66" height="24" stroke="none"/><rect x="1428.8" y="714.3" width="67.2" height="24" stroke="none"/><polyline points="1399,726 1410,716 1428,716" fill="none" stroke-width="3.0"/><rect x="1342.5" y="798" width="26.5" height="39.8" stroke="none"/><rect x="1418" y="798" width="26.4" height="39.8" stroke="none"/><rect x="1342.5" y="940" width="26.5" height="38" stroke="none"/><rect x="1418" y="940" width="26.4" height="38" stroke="none"/><polyline points="1400,763 1420,790 1431,798" fill="none" stroke-width="3.0"/><rect x="1276.2" y="961.5" width="27.3" height="18.6" stroke="none"/><rect x="1276.2" y="1004.5" width="27.3" height="18" stroke="none"/><polyline points="1306,970 1320,958 1342,958" fill="none" stroke-width="3.0"/><polyline points="1290,1025 1300,1040 1375,1103" fill="none" stroke-width="3.0"/><polyline points="1431,978 1431,1000" fill="none" stroke-width="3.0"/><polyline points="1306,1020 1330,1045 1374.8,1090" fill="none" stroke-width="3.0"/><polyline points="1426.6,1090 1426.6,1010 1431,1000" fill="none" stroke-width="3.0"/><polyline points="689.8,881.2 709,893.6 727.8,893.6 810,976 948.6,976 1057,1081 1072,1081" fill="none" stroke-width="3.0"/><polyline points="689.8,918.9 704,904 724,904 806,986 944,986 1050,1092 1072,1092" fill="none" stroke-width="3.0"/><polyline points="689.8,1032 702,1046.5 771,1046.5 849.4,1124.7 1100,1124.7 1130,1113.8" fill="none" stroke-width="3.0"/><polyline points="652.2,1032 668,1053 769,1053 847,1131 1176,1131 1189,1113.8" fill="none" stroke-width="3.0"/><polyline points="1012,1062 1130,1062 1160,1084" fill="none" stroke-width="3.0"/></g><circle cx="689.8" cy="1069.8" r="16" fill="#000"/><path d="M672.8 1069.8H706.8M689.8 1052.8V1086.8" stroke="#ff0000" stroke-width="12"/><circle cx="689.8" cy="1032.1" r="16" fill="#000"/><path d="M672.8 1032.1H706.8M689.8 1015.1V1049.1" stroke="#ff0000" stroke-width="12"/><circle cx="689.8" cy="994.4" r="16" fill="#000"/><path d="M672.8 994.4H706.8M689.8 977.4V1011.4" stroke="#ff0000" stroke-width="12"/><circle cx="689.8" cy="956.7" r="16" fill="#000"/><path d="M672.8 956.7H706.8M689.8 939.7V973.7" stroke="#ff0000" stroke-width="12"/><circle cx="689.8" cy="919" r="16" fill="#000"/><path d="M672.8 919H706.8M689.8 902V936" stroke="#ff0000" stroke-width="12"/><circle cx="689.8" cy="881.2" r="16" fill="#000"/><path d="M672.8 881.2H706.8M689.8 864.2V898.2" stroke="#ff0000" stroke-width="12"/><circle cx="689.8" cy="843.5" r="16" fill="#000"/><path d="M672.8 843.5H706.8M689.8 826.5V860.5" stroke="#ff0000" stroke-width="12"/><circle cx="689.8" cy="805.8" r="16" fill="#000"/><path d="M672.8 805.8H706.8M689.8 788.8V822.8" stroke="#ff0000" stroke-width="12"/><circle cx="689.8" cy="768.1" r="16" fill="#000"/><path d="M672.8 768.1H706.8M689.8 751.1V785.1" stroke="#ff0000" stroke-width="12"/><circle cx="681.7" cy="441.8" r="7.3" fill="#000"/><circle cx="681.7" cy="441.8" r="3.7" fill="#2a2a2a" stroke="#777" stroke-width="2.1"/><circle cx="655" cy="374.7" r="7.3" fill="#000"/><circle cx="655" cy="374.7" r="3.7" fill="#2a2a2a" stroke="#777" stroke-width="2.1"/><circle cx="727" cy="374" r="7.3" fill="#000"/><circle cx="727" cy="374" r="3.7" fill="#2a2a2a" stroke="#777" stroke-width="2.1"/><circle cx="745" cy="379" r="7.3" fill="#000"/><circle cx="745" cy="379" r="3.7" fill="#2a2a2a" stroke="#777" stroke-width="2.1"/><circle cx="880" cy="377" r="7.3" fill="#000"/><circle cx="880" cy="377" r="3.7" fill="#2a2a2a" stroke="#777" stroke-width="2.1"/><circle cx="630" cy="490" r="7.3" fill="#000"/><circle cx="630" cy="490" r="3.7" fill="#2a2a2a" stroke="#777" stroke-width="2.1"/><circle cx="786.8" cy="638" r="7.3" fill="#000"/><circle cx="786.8" cy="638" r="3.7" fill="#2a2a2a" stroke="#777" stroke-width="2.1"/><circle cx="826.7" cy="637" r="7.3" fill="#000"/><circle cx="826.7" cy="637" r="3.7" fill="#2a2a2a" stroke="#777" stroke-width="2.1"/><circle cx="878" cy="589" r="7.3" fill="#000"/><circle cx="878" cy="589" r="3.7" fill="#2a2a2a" stroke="#777" stroke-width="2.1"/><circle cx="911" cy="631" r="7.3" fill="#000"/><circle cx="911" cy="631" r="3.7" fill="#2a2a2a" stroke="#777" stroke-width="2.1"/><circle cx="955" cy="656" r="7.3" fill="#000"/><circle cx="955" cy="656" r="3.7" fill="#2a2a2a" stroke="#777" stroke-width="2.1"/><rect x="598.8" y="714.5" width="31.8" height="31.8" rx="3" fill="#000"/><rect x="601.5" y="717.2" width="26.4" height="26.4" fill="#666"/><circle cx="614.7" cy="730.4" r="8.2" fill="#262626"/><rect x="636.3" y="714.5" width="31.8" height="31.8" rx="3" fill="#000"/><rect x="639" y="717.2" width="26.4" height="26.4" fill="#666"/><circle cx="652.2" cy="730.4" r="8.2" fill="#262626"/><rect x="673.9" y="714.5" width="31.8" height="31.8" rx="3" fill="#000"/><rect x="676.6" y="717.2" width="26.4" height="26.4" fill="#666"/><circle cx="689.8" cy="730.4" r="8.2" fill="#262626"/><circle cx="614.7" cy="768.1" r="15.9" fill="#000"/><circle cx="614.7" cy="768.1" r="13.2" fill="#666"/><circle cx="614.7" cy="768.1" r="8.2" fill="#262626"/><circle cx="652.2" cy="768.1" r="15.9" fill="#000"/><circle cx="652.2" cy="768.1" r="13.2" fill="#666"/><circle cx="652.2" cy="768.1" r="8.2" fill="#262626"/><circle cx="689.8" cy="768.1" r="13.2" fill="#666"/><circle cx="689.8" cy="768.1" r="8.2" fill="#262626"/><circle cx="614.7" cy="805.8" r="15.9" fill="#000"/><circle cx="614.7" cy="805.8" r="13.2" fill="#666"/><circle cx="614.7" cy="805.8" r="8.2" fill="#262626"/><circle cx="652.2" cy="805.8" r="15.9" fill="#000"/><circle cx="652.2" cy="805.8" r="13.2" fill="#666"/><circle cx="652.2" cy="805.8" r="8.2" fill="#262626"/><circle cx="689.8" cy="805.8" r="13.2" fill="#666"/><circle cx="689.8" cy="805.8" r="8.2" fill="#262626"/><circle cx="614.7" cy="843.5" r="15.9" fill="#000"/><circle cx="614.7" cy="843.5" r="13.2" fill="#666"/><circle cx="614.7" cy="843.5" r="8.2" fill="#262626"/><circle cx="652.2" cy="843.5" r="15.9" fill="#000"/><circle cx="652.2" cy="843.5" r="13.2" fill="#666"/><circle cx="652.2" cy="843.5" r="8.2" fill="#262626"/><circle cx="689.8" cy="843.5" r="13.2" fill="#666"/><circle cx="689.8" cy="843.5" r="8.2" fill="#262626"/><circle cx="614.7" cy="881.2" r="15.9" fill="#000"/><circle cx="614.7" cy="881.2" r="13.2" fill="#666"/><circle cx="614.7" cy="881.2" r="8.2" fill="#262626"/><circle cx="652.2" cy="881.2" r="15.9" fill="#000"/><circle cx="652.2" cy="881.2" r="13.2" fill="#666"/><circle cx="652.2" cy="881.2" r="8.2" fill="#262626"/><circle cx="689.8" cy="881.2" r="13.2" fill="#666"/><circle cx="689.8" cy="881.2" r="8.2" fill="#262626"/><circle cx="614.7" cy="919" r="15.9" fill="#000"/><circle cx="614.7" cy="919" r="13.2" fill="#666"/><circle cx="614.7" cy="919" r="8.2" fill="#262626"/><circle cx="652.2" cy="919" r="15.9" fill="#000"/><circle cx="652.2" cy="919" r="13.2" fill="#666"/><circle cx="652.2" cy="919" r="8.2" fill="#262626"/><circle cx="689.8" cy="919" r="13.2" fill="#666"/><circle cx="689.8" cy="919" r="8.2" fill="#262626"/><circle cx="614.7" cy="956.7" r="15.9" fill="#000"/><circle cx="614.7" cy="956.7" r="13.2" fill="#666"/><circle cx="614.7" cy="956.7" r="8.2" fill="#262626"/><circle cx="652.2" cy="956.7" r="15.9" fill="#000"/><circle cx="652.2" cy="956.7" r="13.2" fill="#666"/><circle cx="652.2" cy="956.7" r="8.2" fill="#262626"/><circle cx="689.8" cy="956.7" r="13.2" fill="#666"/><circle cx="689.8" cy="956.7" r="8.2" fill="#262626"/><circle cx="614.7" cy="994.4" r="15.9" fill="#000"/><circle cx="614.7" cy="994.4" r="13.2" fill="#666"/><circle cx="614.7" cy="994.4" r="8.2" fill="#262626"/><circle cx="652.2" cy="994.4" r="15.9" fill="#000"/><circle cx="652.2" cy="994.4" r="13.2" fill="#666"/><circle cx="652.2" cy="994.4" r="8.2" fill="#262626"/><circle cx="689.8" cy="994.4" r="13.2" fill="#666"/><circle cx="689.8" cy="994.4" r="8.2" fill="#262626"/><circle cx="614.7" cy="1032.1" r="15.9" fill="#000"/><circle cx="614.7" cy="1032.1" r="13.2" fill="#666"/><circle cx="614.7" cy="1032.1" r="8.2" fill="#262626"/><circle cx="652.2" cy="1032.1" r="15.9" fill="#000"/><circle cx="652.2" cy="1032.1" r="13.2" fill="#666"/><circle cx="652.2" cy="1032.1" r="8.2" fill="#262626"/><circle cx="689.8" cy="1032.1" r="13.2" fill="#666"/><circle cx="689.8" cy="1032.1" r="8.2" fill="#262626"/><circle cx="614.7" cy="1069.8" r="15.9" fill="#000"/><circle cx="614.7" cy="1069.8" r="13.2" fill="#666"/><circle cx="614.7" cy="1069.8" r="8.2" fill="#262626"/><circle cx="652.2" cy="1069.8" r="15.9" fill="#000"/><circle cx="652.2" cy="1069.8" r="13.2" fill="#666"/><circle cx="652.2" cy="1069.8" r="8.2" fill="#262626"/><circle cx="689.8" cy="1069.8" r="13.2" fill="#666"/><circle cx="689.8" cy="1069.8" r="8.2" fill="#262626"/><circle cx="1000.9" cy="279" r="7.3" fill="#000"/><circle cx="1000.9" cy="279" r="3.7" fill="#2a2a2a" stroke="#777" stroke-width="2.1"/><circle cx="1004.6" cy="338.9" r="7.3" fill="#000"/><circle cx="1004.6" cy="338.9" r="3.7" fill="#2a2a2a" stroke="#777" stroke-width="2.1"/><circle cx="1041.6" cy="413.8" r="3.7" fill="#2a2a2a" stroke="#777" stroke-width="2.1"/><circle cx="941.7" cy="416" r="7.3" fill="#000"/><circle cx="941.7" cy="416" r="3.7" fill="#2a2a2a" stroke="#777" stroke-width="2.1"/><circle cx="945.5" cy="435.5" r="7.3" fill="#000"/><circle cx="945.5" cy="435.5" r="3.7" fill="#2a2a2a" stroke="#777" stroke-width="2.1"/><circle cx="999.4" cy="447.5" r="7.3" fill="#000"/><circle cx="999.4" cy="447.5" r="3.7" fill="#2a2a2a" stroke="#777" stroke-width="2.1"/><circle cx="1017" cy="524" r="7.3" fill="#000"/><circle cx="1017" cy="524" r="3.7" fill="#2a2a2a" stroke="#777" stroke-width="2.1"/><circle cx="999" cy="565" r="7.3" fill="#000"/><circle cx="999" cy="565" r="3.7" fill="#2a2a2a" stroke="#777" stroke-width="2.1"/><circle cx="1037" cy="510" r="7.3" fill="#000"/><circle cx="1037" cy="510" r="3.7" fill="#2a2a2a" stroke="#777" stroke-width="2.1"/><circle cx="1047.3" cy="474" r="7.3" fill="#000"/><circle cx="1047.3" cy="474" r="3.7" fill="#2a2a2a" stroke="#777" stroke-width="2.1"/><circle cx="1107" cy="506.5" r="7.3" fill="#000"/><circle cx="1107" cy="506.5" r="3.7" fill="#2a2a2a" stroke="#777" stroke-width="2.1"/><circle cx="1103" cy="569" r="7.3" fill="#000"/><circle cx="1103" cy="569" r="3.7" fill="#2a2a2a" stroke="#777" stroke-width="2.1"/><circle cx="1129" cy="566" r="7.3" fill="#000"/><circle cx="1129" cy="566" r="3.7" fill="#2a2a2a" stroke="#777" stroke-width="2.1"/><circle cx="1148" cy="590" r="7.3" fill="#000"/><circle cx="1148" cy="590" r="3.7" fill="#2a2a2a" stroke="#777" stroke-width="2.1"/><circle cx="1053" cy="660" r="7.3" fill="#000"/><circle cx="1053" cy="660" r="3.7" fill="#2a2a2a" stroke="#777" stroke-width="2.1"/><circle cx="1098" cy="578" r="7.3" fill="#000"/><circle cx="1098" cy="578" r="3.7" fill="#2a2a2a" stroke="#777" stroke-width="2.1"/><circle cx="1142" cy="563" r="7.3" fill="#000"/><circle cx="1142" cy="563" r="3.7" fill="#2a2a2a" stroke="#777" stroke-width="2.1"/><circle cx="1333" cy="487" r="7.3" fill="#000"/><circle cx="1333" cy="487" r="3.7" fill="#2a2a2a" stroke="#777" stroke-width="2.1"/><circle cx="1312" cy="471" r="3.7" fill="#2a2a2a" stroke="#777" stroke-width="2.1"/><circle cx="1297" cy="490" r="7.3" fill="#000"/><circle cx="1297" cy="490" r="3.7" fill="#2a2a2a" stroke="#777" stroke-width="2.1"/><circle cx="1259" cy="520" r="7.3" fill="#000"/><circle cx="1259" cy="520" r="3.7" fill="#2a2a2a" stroke="#777" stroke-width="2.1"/><circle cx="1276" cy="514" r="7.3" fill="#000"/><circle cx="1276" cy="514" r="3.7" fill="#2a2a2a" stroke="#777" stroke-width="2.1"/><circle cx="1245" cy="503" r="7.3" fill="#000"/><circle cx="1245" cy="503" r="3.7" fill="#2a2a2a" stroke="#777" stroke-width="2.1"/><circle cx="1242" cy="528" r="7.3" fill="#000"/><circle cx="1242" cy="528" r="3.7" fill="#2a2a2a" stroke="#777" stroke-width="2.1"/><circle cx="1283" cy="522" r="7.3" fill="#000"/><circle cx="1283" cy="522" r="3.7" fill="#2a2a2a" stroke="#777" stroke-width="2.1"/><circle cx="1076.6" cy="298.5" r="7.3" fill="#000"/><circle cx="1076.6" cy="298.5" r="3.7" fill="#2a2a2a" stroke="#777" stroke-width="2.1"/><circle cx="1111.8" cy="291.7" r="7.3" fill="#000"/><circle cx="1111.8" cy="291.7" r="3.7" fill="#2a2a2a" stroke="#777" stroke-width="2.1"/><circle cx="1116.3" cy="332.9" r="7.3" fill="#000"/><circle cx="1116.3" cy="332.9" r="3.7" fill="#2a2a2a" stroke="#777" stroke-width="2.1"/><circle cx="1163" cy="329" r="7.3" fill="#000"/><circle cx="1163" cy="329" r="3.7" fill="#2a2a2a" stroke="#777" stroke-width="2.1"/><circle cx="1237" cy="349" r="7.3" fill="#000"/><circle cx="1237" cy="349" r="3.7" fill="#2a2a2a" stroke="#777" stroke-width="2.1"/><circle cx="1068" cy="343" r="7.3" fill="#000"/><circle cx="1068" cy="343" r="3.7" fill="#2a2a2a" stroke="#777" stroke-width="2.1"/><circle cx="1470.6" cy="350" r="10" fill="#000"/><path d="M1459.8 339.2L1481.4 360.8M1481.4 339.2L1459.8 360.8" stroke="#6e6e6e" stroke-width="2.6"/><circle cx="1470.6" cy="350" r="8.5" fill="#262626" stroke="#777" stroke-width="1.3"/><circle cx="1470.6" cy="375.2" r="10" fill="#000"/><path d="M1459.8 364.4L1481.4 386M1481.4 364.4L1459.8 386" stroke="#6e6e6e" stroke-width="2.6"/><circle cx="1470.6" cy="375.2" r="8.5" fill="#262626" stroke="#777" stroke-width="1.3"/><circle cx="1470.6" cy="606.6" r="10" fill="#000"/><path d="M1459.8 595.8L1481.4 617.4M1481.4 595.8L1459.8 617.4" stroke="#6e6e6e" stroke-width="2.6"/><circle cx="1470.6" cy="606.6" r="8.5" fill="#262626" stroke="#777" stroke-width="1.3"/><circle cx="1470.6" cy="631.3" r="10" fill="#000"/><path d="M1459.8 620.5L1481.4 642.1M1481.4 620.5L1459.8 642.1" stroke="#6e6e6e" stroke-width="2.6"/><circle cx="1470.6" cy="631.3" r="8.5" fill="#262626" stroke="#777" stroke-width="1.3"/><circle cx="1450" cy="455" r="9.5" fill="#000"/><path d="M1439.5 444.5L1460.5 465.5M1460.5 444.5L1439.5 465.5" stroke="#6e6e6e" stroke-width="2.6"/><circle cx="1450" cy="455" r="8" fill="#262626" stroke="#777" stroke-width="1.3"/><circle cx="1450" cy="515" r="9.5" fill="#000"/><path d="M1439.5 504.5L1460.5 525.5M1460.5 504.5L1439.5 525.5" stroke="#6e6e6e" stroke-width="2.6"/><circle cx="1450" cy="515" r="8" fill="#262626" stroke="#777" stroke-width="1.3"/><circle cx="1384" cy="423" r="7.3" fill="#000"/><circle cx="1384" cy="423" r="3.7" fill="#2a2a2a" stroke="#777" stroke-width="2.1"/><circle cx="1337" cy="440" r="7.3" fill="#000"/><circle cx="1337" cy="440" r="3.7" fill="#2a2a2a" stroke="#777" stroke-width="2.1"/><circle cx="1367" cy="457" r="7.3" fill="#000"/><circle cx="1367" cy="457" r="3.7" fill="#2a2a2a" stroke="#777" stroke-width="2.1"/><circle cx="1352.4" cy="617.8" r="6" fill="#888"/><circle cx="1364" cy="533" r="7.3" fill="#000"/><circle cx="1364" cy="533" r="3.7" fill="#2a2a2a" stroke="#777" stroke-width="2.1"/><circle cx="965" cy="684" r="7.3" fill="#000"/><circle cx="965" cy="684" r="3.7" fill="#2a2a2a" stroke="#777" stroke-width="2.1"/><circle cx="1053" cy="628" r="7.3" fill="#000"/><circle cx="1053" cy="628" r="3.7" fill="#2a2a2a" stroke="#777" stroke-width="2.1"/><circle cx="1120.7" cy="690" r="15.7" fill="#000"/><circle cx="1120.7" cy="690" r="13" fill="#666"/><circle cx="1120.7" cy="690" r="8.1" fill="#262626"/><circle cx="1157.6" cy="690" r="15.7" fill="#000"/><circle cx="1157.6" cy="690" r="13" fill="#666"/><circle cx="1157.6" cy="690" r="8.1" fill="#262626"/><circle cx="1158" cy="738" r="7.3" fill="#000"/><circle cx="1158" cy="738" r="3.7" fill="#2a2a2a" stroke="#777" stroke-width="2.1"/><circle cx="1220" cy="788" r="7.3" fill="#000"/><circle cx="1220" cy="788" r="3.7" fill="#2a2a2a" stroke="#777" stroke-width="2.1"/><circle cx="772.7" cy="1082.3" r="14.7" fill="#000"/><circle cx="772.7" cy="1082.3" r="12" fill="#666"/><circle cx="772.7" cy="1082.3" r="7.4" fill="#262626"/><circle cx="802.5" cy="1082.3" r="14.7" fill="#000"/><circle cx="802.5" cy="1082.3" r="12" fill="#666"/><circle cx="802.5" cy="1082.3" r="7.4" fill="#262626"/><circle cx="832.2" cy="1082.3" r="14.7" fill="#000"/><circle cx="832.2" cy="1082.3" r="12" fill="#666"/><circle cx="832.2" cy="1082.3" r="7.4" fill="#262626"/><circle cx="862" cy="1082.3" r="14.7" fill="#000"/><circle cx="862" cy="1082.3" r="12" fill="#666"/><circle cx="862" cy="1082.3" r="7.4" fill="#262626"/><circle cx="891.7" cy="1082.3" r="14.7" fill="#000"/><circle cx="891.7" cy="1082.3" r="12" fill="#666"/><circle cx="891.7" cy="1082.3" r="7.4" fill="#262626"/><circle cx="921.5" cy="1082.3" r="14.7" fill="#000"/><circle cx="921.5" cy="1082.3" r="12" fill="#666"/><circle cx="921.5" cy="1082.3" r="7.4" fill="#262626"/><circle cx="951.2" cy="1082.3" r="14.7" fill="#000"/><circle cx="951.2" cy="1082.3" r="12" fill="#666"/><circle cx="951.2" cy="1082.3" r="7.4" fill="#262626"/><circle cx="981" cy="1082.3" r="14.7" fill="#000"/><circle cx="981" cy="1082.3" r="12" fill="#666"/><circle cx="981" cy="1082.3" r="7.4" fill="#262626"/><circle cx="1099.9" cy="1084.5" r="13.7" fill="#000"/><circle cx="1099.9" cy="1084.5" r="11" fill="#666"/><circle cx="1099.9" cy="1084.5" r="6.8" fill="#262626"/><circle cx="1099.9" cy="1113.8" r="13.7" fill="#000"/><circle cx="1099.9" cy="1113.8" r="11" fill="#666"/><circle cx="1099.9" cy="1113.8" r="6.8" fill="#262626"/><circle cx="1130.3" cy="1084.5" r="13.7" fill="#000"/><circle cx="1130.3" cy="1084.5" r="11" fill="#666"/><circle cx="1130.3" cy="1084.5" r="6.8" fill="#262626"/><circle cx="1130.3" cy="1113.8" r="13.7" fill="#000"/><circle cx="1130.3" cy="1113.8" r="11" fill="#666"/><circle cx="1130.3" cy="1113.8" r="6.8" fill="#262626"/><circle cx="1159.6" cy="1084.5" r="13.7" fill="#000"/><circle cx="1159.6" cy="1084.5" r="11" fill="#666"/><circle cx="1159.6" cy="1084.5" r="6.8" fill="#262626"/><circle cx="1159.6" cy="1113.8" r="13.7" fill="#000"/><circle cx="1159.6" cy="1113.8" r="11" fill="#666"/><circle cx="1159.6" cy="1113.8" r="6.8" fill="#262626"/><circle cx="1189" cy="1084.5" r="13.7" fill="#000"/><circle cx="1189" cy="1084.5" r="11" fill="#666"/><circle cx="1189" cy="1084.5" r="6.8" fill="#262626"/><circle cx="1189" cy="1113.8" r="13.7" fill="#000"/><circle cx="1189" cy="1113.8" r="11" fill="#666"/><circle cx="1189" cy="1113.8" r="6.8" fill="#262626"/><circle cx="1219.4" cy="1084.5" r="11" fill="#666"/><circle cx="1219.4" cy="1084.5" r="6.8" fill="#262626"/><rect x="1208.4" y="1102.8" width="22" height="22" fill="#666"/><circle cx="1219.4" cy="1113.8" r="6.8" fill="#262626"/><circle cx="1374.8" cy="1103.4" r="18" fill="#000"/><circle cx="1374.8" cy="1103.4" r="15.3" fill="#666"/><circle cx="1374.8" cy="1103.4" r="9.5" fill="#262626"/><circle cx="1426.6" cy="1103.4" r="18" fill="#000"/><circle cx="1426.6" cy="1103.4" r="15.3" fill="#666"/><circle cx="1426.6" cy="1103.4" r="9.5" fill="#262626"/><rect x="1348" y="998" width="22" height="14" fill="#888"/><rect x="1406" y="998" width="22" height="14" fill="#888"/><circle cx="563.9" cy="293.2" r="19" fill="#000"/><path d="M544.4 273.7L583.4 312.7M583.4 273.7L544.4 312.7" stroke="#6e6e6e" stroke-width="2.6"/><circle cx="563.9" cy="293.2" r="15.2" fill="#262626" stroke="#777" stroke-width="1.3"/><circle cx="1497.3" cy="293.3" r="19" fill="#000"/><path d="M1477.8 273.8L1516.8 312.8M1516.8 273.8L1477.8 312.8" stroke="#6e6e6e" stroke-width="2.6"/><circle cx="1497.3" cy="293.3" r="15.2" fill="#262626" stroke="#777" stroke-width="1.3"/><circle cx="563.7" cy="1189.9" r="19" fill="#000"/><path d="M544.2 1170.4L583.2 1209.4M583.2 1170.4L544.2 1209.4" stroke="#6e6e6e" stroke-width="2.6"/><circle cx="563.7" cy="1189.9" r="15.2" fill="#262626" stroke="#777" stroke-width="1.3"/><circle cx="1496.7" cy="1189.7" r="19" fill="#000"/><path d="M1477.2 1170.2L1516.2 1209.2M1516.2 1170.2L1477.2 1209.2" stroke="#6e6e6e" stroke-width="2.6"/><circle cx="1496.7" cy="1189.7" r="15.2" fill="#262626" stroke="#777" stroke-width="1.3"/><circle cx="1082.5" cy="1164.9" r="13.5" fill="#000"/><path d="M1068 1150.4L1097 1179.4M1097 1150.4L1068 1179.4" stroke="#6e6e6e" stroke-width="2.6"/><circle cx="1082.5" cy="1164.9" r="11.4" fill="#262626" stroke="#777" stroke-width="1.3"/><g fill="none" stroke="#ffcc00"><polyline points="643,352 541.8,352 541.8,619 643,619" stroke-width="3.3"/><polyline points="908,351.3 918.8,351.3 918.8,389.5" stroke-width="3.3"/><polyline points="918.8,579 918.8,619 906,619" stroke-width="3.3"/><polyline points="635.9,374.2 564.7,374.2 564.7,418.3 608.9,418.3 608.9,460 564.7,460 564.7,510.2 608.9,510.2 608.9,550.6 564.7,550.6 564.7,598.6 625,598.6" stroke-width="3.3"/><polyline points="564.7,385.1 633.6,385.1" stroke-width="3.3"/><polyline points="643.1,371.9 643.1,598.6" stroke-width="3.3"/><circle cx="636.4" cy="630" r="5.5" fill="#ffcc00" stroke="none"/><rect x="596.5" y="708" width="113" height="384" stroke-width="3.3"/><polyline points="633.8,708 633.8,1092" stroke-width="3.3"/><polyline points="670.8,708 670.8,1092" stroke-width="3.3"/><polyline points="596.5,747.9 709.5,747.9" stroke-width="3.3"/><rect x="932.3" y="275.7" width="100.1" height="53.5" stroke-width="3.3"/><rect x="976.2" y="371.9" width="24.7" height="27" stroke-width="2.8"/><rect x="1009.1" y="371.9" width="25.5" height="27" stroke-width="2.8"/><rect x="976.2" y="415.3" width="24.7" height="27" stroke-width="2.8"/><rect x="1009.1" y="415.3" width="25.5" height="27" stroke-width="2.8"/><rect x="976.2" y="456.3" width="24.7" height="27" stroke-width="2.8"/><rect x="1009.1" y="456.3" width="25.5" height="27" stroke-width="2.8"/><rect x="976.2" y="502.7" width="24.7" height="27" stroke-width="2.8"/><rect x="1009.1" y="502.7" width="25.5" height="27" stroke-width="2.8"/><rect x="976.2" y="543.1" width="24.7" height="27" stroke-width="2.8"/><rect x="1009.1" y="543.1" width="25.5" height="27" stroke-width="2.8"/><rect x="976.2" y="585" width="24.7" height="27" stroke-width="2.8"/><rect x="1009.1" y="585" width="25.5" height="27" stroke-width="2.8"/><polyline points="1111.2,445.8 1084.3,445.8 1084.3,490.8 1111.2,490.8" stroke-width="2.6"/><polyline points="1111.2,462.8 1111.2,473.8" stroke-width="2.6"/><polyline points="1111.2,514.7 1084.3,514.7 1084.3,559.7 1111.2,559.7" stroke-width="2.6"/><polyline points="1111.2,531.7 1111.2,542.7" stroke-width="2.6"/><rect x="1130" y="477.6" width="28.8" height="20.7" stroke-width="2.8"/><rect x="1169.6" y="477.6" width="28.7" height="20.7" stroke-width="2.8"/><rect x="1130" y="510" width="28.8" height="21" stroke-width="2.8"/><rect x="1169.6" y="510" width="28.7" height="21" stroke-width="2.8"/><rect x="1136.6" y="584.7" width="24.3" height="27.9" stroke-width="2.8"/><rect x="1169" y="584.7" width="26" height="27.9" stroke-width="2.8"/><polyline points="1222.5,422 1222.5,409.9 1232,409.9" stroke-width="2.6"/><polyline points="1292,409.9 1302,409.9 1302,420" stroke-width="2.6"/><polyline points="1222.5,478 1222.5,489.3 1232,489.3" stroke-width="2.6"/><circle cx="1305" cy="486" r="4.5" fill="#ffcc00" stroke="none"/><rect x="1077.9" y="283.5" width="31.4" height="25.2" stroke-width="3"/><path d="M1079 320V340L1085 346H1102L1108 340V320" stroke-width="3"/><path d="M1083 315H1105M1094 315V322" stroke-width="2.6"/><rect x="1122.8" y="283.5" width="27.9" height="25.2" stroke-width="2.8"/><rect x="1122.8" y="318.5" width="27.9" height="22.5" stroke-width="2.8"/><rect x="1165" y="283.5" width="27.9" height="25.2" stroke-width="2.8"/><rect x="1165" y="318.5" width="27.9" height="22.5" stroke-width="2.8"/><rect x="1208.2" y="283.5" width="27" height="26" stroke-width="2.8"/><rect x="1208.2" y="317" width="27" height="26" stroke-width="2.8"/><rect x="1251.4" y="283.5" width="27.8" height="26" stroke-width="2.8"/><rect x="1251.4" y="317" width="27.8" height="26" stroke-width="2.8"/><rect x="1295.3" y="283.5" width="27" height="26" stroke-width="2.8"/><rect x="1295.3" y="317" width="27" height="26" stroke-width="2.8"/><rect x="1334.8" y="283.5" width="28.8" height="26" stroke-width="2.8"/><rect x="1334.8" y="317" width="28.8" height="26" stroke-width="2.8"/><rect x="1165" y="358" width="27.9" height="20.5" stroke-width="2.8"/><rect x="1165" y="390" width="27.9" height="20.5" stroke-width="2.8"/><rect x="1251.4" y="356.3" width="19.6" height="27.9" stroke-width="2.8"/><rect x="1282" y="356.3" width="20" height="27.9" stroke-width="2.8"/><rect x="1282.7" y="356.3" width="20.7" height="27.9" stroke-width="2.8"/><path d="M1440.7 350.1V340.1H1501.2V350.1M1440.7 375.1V385.6H1501.2V375.1" stroke-width="3.3"/><path d="M1440.7 606.9V596.9H1501.2V606.9M1440.7 631.9V642.4H1501.2V631.9" stroke-width="3.3"/><path d="M1442.8 462V430H1467M1500 430H1519V542.2H1499.2M1469 542.2H1441.5V512" stroke-width="3.3"/><path d="M1393 402.8H1410M1393 416.8H1410" stroke-width="2"/><path d="M1393 431.6H1410M1393 445.6H1410" stroke-width="2"/><path d="M1352 418V440M1371 418V440M1352 418H1357M1366 418H1371" stroke-width="2.6"/><rect x="1261" y="536.2" width="44.2" height="98.9" stroke-width="3"/><path d="M1367.3 547.4V520.4H1393.6V547.4M1367.3 551.4V578.4H1393.6V551.4" stroke-width="2.8"/><path d="M1367.3 621.6V594.6H1393.6V621.6M1367.3 625.6V652.6H1393.6V625.6" stroke-width="2.8"/><path d="M973.7 635.5H1020.5M973.7 663.4H1020.5" stroke-width="3.3"/><path d="M990 641V660M1005 641L990 650.5L1005 660ZM985 650.5H1010" stroke-width="3"/><rect x="892" y="778" width="155" height="29" stroke-width="2.8"/><path d="M1138.5 641.6A48.4 48.4 0 1 1 1138.4 641.6Z" stroke-width="3.5"/><path d="M1104 655A48 48 0 0 0 1104 725Z" fill="#ffcc00" stroke="none"/><path d="M1108 711H1128M1155 712H1171M1163 704V720" stroke-width="3"/><rect x="1258.6" y="673.6" width="27.6" height="31.1" stroke-width="3"/><rect x="1105.2" y="749.8" width="185.3" height="183.9" stroke-width="3.3"/><path d="M1128 795A86 86 0 0 1 1267 795M1128 890A86 86 0 0 0 1267 890" stroke-width="3.3"/><path d="M1128 795Q1115 770 1140 766Q1165 764 1172 777M1267 795Q1280 770 1255 766Q1230 764 1223 777" stroke-width="3"/><path d="M1128 890Q1115 915 1140 919Q1165 921 1172 908M1267 890Q1280 915 1255 919Q1230 921 1223 908" stroke-width="3"/><polygon points="1351,664 1450,664 1476.8,690 1476.8,763 1450,789.8 1351,789.8" stroke-width="3.3"/><path d="M1358 698H1372M1458 698H1472M1465 690V706" stroke-width="3.3"/><rect x="1330.5" y="840.2" width="125.9" height="97.1" stroke-width="3.3"/><polyline points="1449,840.2 1449,937.3" stroke-width="2.6"/><path d="M1346 857H1366M1424 857H1440M1432 849V865" stroke-width="2.6"/><path d="M1347 919Q1353 908 1360 916T1373 915M1415 919Q1421 908 1428 916T1441 915" stroke-width="3"/><rect x="1273.7" y="959" width="32.3" height="23.6" stroke-width="2.8"/><rect x="1273.7" y="1002" width="32.3" height="23" stroke-width="2.8"/><circle cx="1335" cy="953" r="4.5" fill="#ffcc00" stroke="none"/><path d="M1278 995Q1290 988 1302 995" stroke-width="1.8"/><circle cx="787.6" cy="1082.3" r="2.2" fill="#ffcc00" stroke="none"/><circle cx="817.4" cy="1082.3" r="2.2" fill="#ffcc00" stroke="none"/><circle cx="847.1" cy="1082.3" r="2.2" fill="#ffcc00" stroke="none"/><circle cx="876.9" cy="1082.3" r="2.2" fill="#ffcc00" stroke="none"/><circle cx="906.6" cy="1082.3" r="2.2" fill="#ffcc00" stroke="none"/><circle cx="936.4" cy="1082.3" r="2.2" fill="#ffcc00" stroke="none"/><circle cx="966.1" cy="1082.3" r="2.2" fill="#ffcc00" stroke="none"/><path d="M742.5 1060.2H758.1V1083.4M742.5 1060.2V1174.2H1010.8V1060.2H995.6V1083.4" stroke-width="3.3"/><path d="M787.5 1174.2V1112.7H966.3V1174.2" stroke-width="3.3"/><rect x="751.6" y="1118" width="30" height="38" stroke-width="3.3"/><rect x="972.8" y="1118" width="29.3" height="38" stroke-width="3.3"/><rect x="1070.6" y="1048.6" width="178.1" height="125" stroke-width="3.3"/><path d="M1205 1159H1234L1219.5 1145Z" stroke-width="0.5"/><path d="M1204 1160H1235L1219.5 1144Z" fill="#ffcc00" stroke="none"/><rect x="1326.3" y="995" width="128.1" height="178.5" stroke-width="3.3"/><path d="M1345 998V1014H1372V998M1403 998V1014H1430V998" stroke-width="3"/><path d="M1355.8 1173V1130L1362.8 1124H1386.8L1393.8 1130V1173" stroke-width="3.3"/><path d="M1374.8 1170V1140" stroke-width="3.3"/><path d="M1365.8 1145H1383.8L1374.8 1128Z" fill="#ffcc00" stroke="none"/><path d="M1407.6 1173V1130L1414.6 1124H1438.6L1445.6 1130V1173" stroke-width="3.3"/><path d="M1426.6 1170V1140" stroke-width="3.3"/><path d="M1417.6 1145H1435.6L1426.6 1128Z" fill="#ffcc00" stroke="none"/></g><g fill="#ffcc00"><text x="591" y="735.4" font-size="13.5" text-anchor="end" font-family="Liberation Sans" textLength="44" lengthAdjust="spacingAndGlyphs">GPIO21</text><text x="591" y="773.1" font-size="13.5" text-anchor="end" font-family="Liberation Sans" textLength="44" lengthAdjust="spacingAndGlyphs">GPIO22</text><text x="591" y="810.8" font-size="13.5" text-anchor="end" font-family="Liberation Sans" textLength="44" lengthAdjust="spacingAndGlyphs">GPIO16</text><text x="591" y="848.5" font-size="13.5" text-anchor="end" font-family="Liberation Sans" textLength="44" lengthAdjust="spacingAndGlyphs">GPIO17</text><text x="591" y="886.2" font-size="13.5" text-anchor="end" font-family="Liberation Sans" textLength="31" lengthAdjust="spacingAndGlyphs">MOSI</text><text x="591" y="924" font-size="13.5" text-anchor="end" font-family="Liberation Sans" textLength="30" lengthAdjust="spacingAndGlyphs">MISO</text><text x="591" y="961.7" font-size="13.5" text-anchor="end" font-family="Liberation Sans" textLength="25" lengthAdjust="spacingAndGlyphs">CLK</text><text x="591" y="999.4" font-size="13.5" text-anchor="end" font-family="Liberation Sans" textLength="16" lengthAdjust="spacingAndGlyphs">SS</text><text x="591" y="1037.1" font-size="13.5" text-anchor="end" font-family="Liberation Sans" textLength="44" lengthAdjust="spacingAndGlyphs">GPIO16</text><text x="591" y="1074.8" font-size="13.5" text-anchor="end" font-family="Liberation Sans" textLength="44" lengthAdjust="spacingAndGlyphs">GPIO17</text><text x="648" y="668" font-size="13.5" text-anchor="start" font-family="Liberation Sans" transform="rotate(90 648 668)" textLength="37" lengthAdjust="spacingAndGlyphs">+3.3V</text><text x="683" y="678" font-size="13.5" text-anchor="start" font-family="Liberation Sans" transform="rotate(90 683 678)" textLength="26" lengthAdjust="spacingAndGlyphs">GND</text><text x="952.5" y="360" font-size="13.5" text-anchor="start" font-family="Liberation Sans" transform="rotate(-90 952.5 360)" textLength="25" lengthAdjust="spacingAndGlyphs">CTS</text><text x="975" y="360" font-size="13.5" text-anchor="start" font-family="Liberation Sans" transform="rotate(-90 975 360)" textLength="25" lengthAdjust="spacingAndGlyphs">DCD</text><text x="998" y="360" font-size="13.5" text-anchor="start" font-family="Liberation Sans" transform="rotate(-90 998 360)" textLength="25" lengthAdjust="spacingAndGlyphs">DSR</text><text x="1021" y="347" font-size="13.5" text-anchor="start" font-family="Liberation Sans" transform="rotate(-90 1021 347)" textLength="13" lengthAdjust="spacingAndGlyphs">RI</text><text x="1428" y="510" font-size="24" text-anchor="start" font-family="Liberation Sans" transform="rotate(-90 1428 510)" textLength="42" lengthAdjust="spacingAndGlyphs">USB</text><text x="1296" y="645" font-size="14.5" text-anchor="start" font-family="Liberation Sans" transform="rotate(90 1296 645)" textLength="88" lengthAdjust="spacingAndGlyphs">PSU_5V_OUT</text><text x="823" y="1202" font-size="24" text-anchor="start" font-family="Liberation Sans" textLength="96" lengthAdjust="spacingAndGlyphs">VANNES</text><text x="745" y="1017" font-size="25" text-anchor="start" font-family="Liberation Mono" textLength="335" lengthAdjust="spacingAndGlyphs">Arrosage Automatique V1.2</text><text x="1094" y="1205" font-size="24" text-anchor="start" font-family="Liberation Sans" textLength="126" lengthAdjust="spacingAndGlyphs">CAPTEURS</text><text x="1337" y="1204" font-size="24" text-anchor="start" font-family="Liberation Sans" textLength="100" lengthAdjust="spacingAndGlyphs">~24V IN</text><path transform="translate(720 800) scale(0.078125)" d="M100,1135 C250,800 450,400 570,220 C600,180 680,180 680,215 C620,330 380,720 115,1130 Z M385,690 C700,450 1000,250 1290,105 C1330,95 1335,135 1300,150 C1000,270 700,450 430,655 Z M390,690 C550,590 950,560 1015,800 C1050,950 900,1080 710,1145 C820,1060 900,960 880,820 C860,660 650,620 470,640 Z M1070,925 C1200,650 1350,450 1480,290 C1500,280 1510,300 1500,320 C1350,520 1200,750 1085,920 Z M1090,340 C1300,160 1700,60 1950,160 C2050,220 1960,380 1820,440 C1700,500 1600,520 1550,535 C1700,490 1850,410 1900,320 C1950,230 1800,190 1600,210 C1400,230 1200,300 1130,410 C1080,390 1070,360 1090,340 Z M1290,570 C1500,510 1900,520 1920,720 C1930,900 1700,1060 1400,1090 C1250,1100 1120,1060 1080,1000 C1200,1030 1400,1030 1550,990 C1750,930 1800,800 1780,700 C1750,590 1550,560 1290,620 Z" stroke="#ffcc00" stroke-width="16" stroke-linejoin="round"/></g><rect x="5.5" y="47.5" width="2042.5" height="33.5" fill="#f4f4f4"/><rect x="5.5" y="47.5" width="33.5" height="1288" fill="#f4f4f4"/><path d="M40.8 72.3V81M55.6 72.3V81M70.5 72.3V81M85.3 54V81M100.1 72.3V81M115 72.3V81M129.8 72.3V81M144.7 72.3V81M159.6 63.5V81M174.4 72.3V81M189.2 72.3V81M204.1 72.3V81M218.9 72.3V81M233.8 54V81M248.6 72.3V81M263.5 72.3V81M278.3 72.3V81M293.2 72.3V81M308.1 63.5V81M322.9 72.3V81M337.8 72.3V81M352.6 72.3V81M367.4 72.3V81M382.3 54V81M397.1 72.3V81M412 72.3V81M426.9 72.3V81M441.7 72.3V81M456.6 63.5V81M471.4 72.3V81M486.2 72.3V81M501.1 72.3V81M515.9 72.3V81M530.8 54V81M545.6 72.3V81M560.5 72.3V81M575.4 72.3V81M590.2 72.3V81M605 63.5V81M619.9 72.3V81M634.7 72.3V81M649.6 72.3V81M664.4 72.3V81M679.3 54V81M694.1 72.3V81M709 72.3V81M723.8 72.3V81M738.7 72.3V81M753.5 63.5V81M768.4 72.3V81M783.2 72.3V81M798.1 72.3V81M812.9 72.3V81M827.8 54V81M842.6 72.3V81M857.5 72.3V81M872.3 72.3V81M887.2 72.3V81M902 63.5V81M916.9 72.3V81M931.7 72.3V81M946.6 72.3V81M961.4 72.3V81M976.3 54V81M991.1 72.3V81M1006 72.3V81M1020.8 72.3V81M1035.7 72.3V81M1050.5 63.5V81M1065.4 72.3V81M1080.2 72.3V81M1095.1 72.3V81M1109.9 72.3V81M1124.8 54V81M1139.6 72.3V81M1154.5 72.3V81M1169.3 72.3V81M1184.2 72.3V81M1199 63.5V81M1213.9 72.3V81M1228.8 72.3V81M1243.6 72.3V81M1258.4 72.3V81M1273.3 54V81M1288.1 72.3V81M1303 72.3V81M1317.8 72.3V81M1332.7 72.3V81M1347.5 63.5V81M1362.4 72.3V81M1377.2 72.3V81M1392.1 72.3V81M1406.9 72.3V81M1421.8 54V81M1436.6 72.3V81M1451.5 72.3V81M1466.3 72.3V81M1481.2 72.3V81M1496 63.5V81M1510.9 72.3V81M1525.8 72.3V81M1540.6 72.3V81M1555.4 72.3V81M1570.3 54V81M1585.1 72.3V81M1600 72.3V81M1614.8 72.3V81M1629.7 72.3V81M1644.5 63.5V81M1659.4 72.3V81M1674.2 72.3V81M1689.1 72.3V81M1703.9 72.3V81M1718.8 54V81M1733.6 72.3V81M1748.5 72.3V81M1763.3 72.3V81M1778.2 72.3V81M1793 63.5V81M1807.9 72.3V81M1822.8 72.3V81M1837.6 72.3V81M1852.4 72.3V81M1867.3 54V81M1882.1 72.3V81M1897 72.3V81M1911.8 72.3V81M1926.7 72.3V81M1941.5 63.5V81M1956.4 72.3V81M1971.2 72.3V81M1986.1 72.3V81M2000.9 72.3V81M2015.8 54V81M2030.6 72.3V81M21 1332.3H39M30 1317.5H39M30 1302.7H39M30 1287.8H39M30 1273H39M12 1258.1H39M30 1243.2H39M30 1228.4H39M30 1213.5H39M30 1198.7H39M21 1183.8H39M30 1169H39M30 1154.2H39M30 1139.3H39M30 1124.5H39M12 1109.6H39M30 1094.8H39M30 1079.9H39M30 1065H39M30 1050.2H39M21 1035.3H39M30 1020.5H39M30 1005.7H39M30 990.8H39M30 976H39M12 961.1H39M30 946.2H39M30 931.4H39M30 916.5H39M30 901.7H39M21 886.9H39M30 872H39M30 857.1H39M30 842.3H39M30 827.5H39M12 812.6H39M30 797.8H39M30 782.9H39M30 768.1H39M30 753.2H39M21 738.4H39M30 723.5H39M30 708.6H39M30 693.8H39M30 679H39M12 664.1H39M30 649.2H39M30 634.4H39M30 619.6H39M30 604.7H39M21 589.9H39M30 575H39M30 560.1H39M30 545.3H39M30 530.5H39M12 515.6H39M30 500.8H39M30 485.9H39M30 471.1H39M30 456.2H39M21 441.4H39M30 426.5H39M30 411.7H39M30 396.8H39M30 382H39M12 367.1H39M30 352.3H39M30 337.4H39M30 322.6H39M30 307.7H39M21 292.9H39M30 278H39M30 263.2H39M30 248.3H39M30 233.5H39M12 218.6H39M30 203.8H39M30 188.9H39M30 174.1H39M30 159.2H39M21 144.4H39M30 129.5H39M30 114.7H39M30 99.8H39M30 85H39" stroke="#9c9c9c" stroke-width="1.3"/><g font-family="Liberation Sans" font-size="16.5" fill="#8d9cb0"><text x="88.6" y="68" textLength="17.2" lengthAdjust="spacingAndGlyphs">10</text><text x="237.1" y="68" textLength="17.2" lengthAdjust="spacingAndGlyphs">20</text><text x="385.6" y="68" textLength="17.2" lengthAdjust="spacingAndGlyphs">30</text><text x="534.1" y="68" textLength="17.2" lengthAdjust="spacingAndGlyphs">40</text><text x="682.6" y="68" textLength="17.2" lengthAdjust="spacingAndGlyphs">50</text><text x="831.1" y="68" textLength="17.2" lengthAdjust="spacingAndGlyphs">60</text><text x="979.6" y="68" textLength="17.2" lengthAdjust="spacingAndGlyphs">70</text><text x="1128.1" y="68" textLength="17.2" lengthAdjust="spacingAndGlyphs">80</text><text x="1276.6" y="68" textLength="17.2" lengthAdjust="spacingAndGlyphs">90</text><text x="1425.1" y="68" textLength="25.5" lengthAdjust="spacingAndGlyphs">100</text><text x="1573.6" y="68" textLength="25.5" lengthAdjust="spacingAndGlyphs">110</text><text x="1722.1" y="68" textLength="25.5" lengthAdjust="spacingAndGlyphs">120</text><text x="1870.6" y="68" textLength="25.5" lengthAdjust="spacingAndGlyphs">130</text><text x="2019.1" y="68" textLength="25.5" lengthAdjust="spacingAndGlyphs">140</text><text transform="translate(13.2 1262.1) rotate(90)" textLength="15.5" lengthAdjust="spacingAndGlyphs">30</text><text transform="translate(13.2 1113.6) rotate(90)" textLength="15.5" lengthAdjust="spacingAndGlyphs">40</text><text transform="translate(13.2 965.1) rotate(90)" textLength="15.5" lengthAdjust="spacingAndGlyphs">50</text><text transform="translate(13.2 816.6) rotate(90)" textLength="15.5" lengthAdjust="spacingAndGlyphs">60</text><text transform="translate(13.2 668.1) rotate(90)" textLength="15.5" lengthAdjust="spacingAndGlyphs">70</text><text transform="translate(13.2 519.6) rotate(90)" textLength="15.5" lengthAdjust="spacingAndGlyphs">80</text><text transform="translate(13.2 371.1) rotate(90)" textLength="15.5" lengthAdjust="spacingAndGlyphs">90</text><text transform="translate(13.2 222.6) rotate(90)" textLength="22.3" lengthAdjust="spacingAndGlyphs">100</text></g><path d="M1923.5 51V81" stroke="#1a66d0" stroke-width="2"/><path d="M12 711H39" stroke="#1a66d0" stroke-width="2"/><rect x="0" y="0" width="5.5" height="1335" fill="#e2e2e2"/><path d="M4.6 2V1335" stroke="#a8a8a8" stroke-width="1.2" stroke-dasharray="1.5 2.8"/><rect x="0.5" y="631.5" width="5" height="74" fill="#f2f2f2" stroke="#756c6c" stroke-width="1"/><path d="M0 669L3.8 663.5V674.5Z" fill="#756c6c"/><rect x="0" y="0" width="2048" height="47.5" fill="#dedede"/><rect x="0" y="0" width="2048" height="1.8" fill="#fbfbfb"/><rect x="0" y="1.8" width="2048" height="1.1" fill="#d0d0d0"/><rect x="375" y="2.9" width="241" height="44.6" fill="#ffffff"/><path d="M374.6 2.9V47.5M616.5 2.9V47.5" stroke="#bdbdbd" stroke-width="1"/><path d="M133.5 2.5V47" stroke="#c6c6c6" stroke-width="1"/><rect x="0" y="47" width="2048" height="1" fill="#d0d0d0"/><g font-family="Liberation Sans" font-size="21" fill="#555555"><text x="18.5" y="32.3">Commencer</text><text x="181" y="32.3">Arrosage automa…</text><text x="422.5" y="32.3">PCB_Arrosage a…</text></g><g fill="none" stroke="#d39a22" stroke-width="1.8" stroke-linejoin="round"><path d="M149.3 17.5Q149.3 15 151.5 15H155.5L157 16.5V33.5H151.3Q149.3 33.5 149.3 31.5Z"/><rect x="149.3" y="21.5" width="22" height="12.3" rx="1.5"/><path d="M151.5 21.3V19L169.5 14.5L170.3 17.5L171 21.5"/></g><g fill="none" stroke="#5ccf5c" stroke-width="1.7"><rect x="392.3" y="15" width="18.6" height="19"/><path d="M392.3 24.5L397 19.5H410.9M392.3 30L397.5 25.3H410.9"/><circle cx="401" cy="28.5" r="2"/><path d="M403 28.5H410.9"/></g><rect x="1218.5" y="62" width="439.5" height="139" fill="rgba(0,0,0,0.18)" rx="5"/><path d="M1217.5 199V66Q1217.5 60 1223.5 60H1651.0Q1657.0 60 1657.0 66V199Z" fill="#f9f9f9" stroke="#cfcfcf" stroke-width="1"/><path d="M1218.0 95.5V66Q1218.0 60.5 1223.5 60.5H1651.0Q1656.5 60.5 1656.5 66V95.5Z" fill="#ececec"/><rect x="1217.5" y="95" width="439.5" height="1.8" fill="#d0d0d0"/><text x="1227" y="83" font-family="Liberation Sans" font-size="18" fill="#333">Outils de Circuits</text><path d="M1632.5 76.7H1649.5" stroke="#444" stroke-width="1.8"/><g fill="none" stroke="#333" stroke-width="1.6" stroke-linecap="butt"><g transform="translate(1247.0 128.8)"><circle cx="-11.5" cy="-9" r="2.8"/><path d="M-8.7 -9H-4V9H7.5"/><circle cx="10.5" cy="9" r="2.8"/></g><g transform="translate(1289.2 128.8)"><circle r="8" stroke-width="5.5"/></g><g transform="translate(1331.5 128.8)" stroke-width="2.6"><circle cx="-2" cy="-5.5" r="5.5"/><path d="M3.5 -5.5H11M-2 0V13"/></g><g transform="translate(1373.8 128.8)" stroke-width="1.5"><path d="M-10.5 -10.5H10.5V-5.5H8.5L7.5 -8H2.5V10.5H5.5V12H-5.5V10.5H-2.5V-8H-7.5L-8.5 -5.5H-10.5Z"/></g><g transform="translate(1416.0 128.8)"><path d="M0 12A12 12 0 1 1 12 0"/><path d="M12 0H0V12" stroke-dasharray="2.5 2"/></g><g transform="translate(1458.2 128.8)"><path d="M12 0A12 12 0 1 0 0 12"/><path d="M0 0V12" stroke-dasharray="2.5 2"/><path d="M-1.5 10.5L1.5 12.5" /></g><g transform="translate(1500.5 128.8)"><circle r="12.2"/></g><g transform="translate(1542.8 128.8)" stroke-width="1.5"><path d="M-3 8C-6 6 -10 1 -10.5 -0.5C-11.5 -2.5 -9.5 -3.5 -8.5 -2.5L-5.5 0.5L-8 -10C-8.5 -12 -6 -12.5 -5.5 -10.5L-3 -2.5L-4 -13C-4 -15 -1.5 -15 -1 -13L0.5 -3L1.5 -13.5C1.5 -15.5 4 -15.5 4 -13.5L4 -3L5.5 -10C6 -12 8.5 -11.5 8 -9.5C7.5 -3 8.5 4 5 8C3 10.5 -1 10 -3 8Z"/></g><g transform="translate(1585.0 128.8)"><circle r="8.5"/><path d="M-12.5 -12.5L-6 -6M12.5 -12.5L6 -6M-12.5 12.5L-6 6M12.5 12.5L6 6"/></g><g transform="translate(1627.2 128.8)" stroke-width="1.7"><rect x="-13" y="-11" width="26" height="22"/><path d="M-13 2L-5 -4.5L3 1L13 -4"/><circle cx="6.5" cy="-5" r="1.6" fill="#333" stroke="none"/></g><g transform="translate(1247.0 172.2)"><circle cx="-11" cy="-10.5" r="1.8" fill="#333"/><path d="M-11 -10.5H9M-11 -10.5V10"/><path d="M5 -13L11 -10.5L5 -8ZM-13.5 7L-11 13L-8.5 7Z" fill="#333"/></g><g transform="translate(1289.2 172.2)"><path d="M5.5 -9.5L-12.5 9H14"/><path d="M-5 2.5A8 8 0 0 1 -3 9" stroke-width="1.2"/></g><g transform="translate(1331.5 172.2)"><circle cx="-10" cy="-10" r="2.5"/><circle cx="10.5" cy="11" r="2.5"/><path d="M-8 -8L8.5 9" stroke-dasharray="3.5 2.5"/></g><g transform="translate(1373.8 172.2)" stroke-dasharray="3.2 2.4"><path d="M-4 -12H11.5V0H5V11.5H-12V-0.5H-4Z"/></g><g transform="translate(1416.0 172.2)" stroke-width="1.8"><path d="M-3.5 -11.5H11.5V11.5H-14V0H-3.5Z"/></g><g transform="translate(1458.2 172.2)"><path d="M-11.5 11.5L11.5 -11.5M-7.5 11.5H-11.5V7.5M7.5 -11.5H11.5V-7.5M-9.5 1.5L-2.5 8.5M2.5 -8.5L9.5 -1.5"/></g><g transform="translate(1500.5 172.2)" stroke-width="1.8"><rect x="-11" y="-11" width="22" height="22"/></g><g transform="translate(1542.8 172.2)" stroke-width="1.5"><rect x="-12" y="-12" width="3.5" height="3.5"/><rect x="8.5" y="-12" width="3.5" height="3.5"/><rect x="-12" y="8.5" width="3.5" height="3.5"/><rect x="8.5" y="8.5" width="3.5" height="3.5"/><rect x="-7.5" y="-7.5" width="10" height="9"/><rect x="-2.5" y="-2" width="9" height="10"/></g><g transform="translate(1585.0 172.2)" stroke-width="1.7"><rect x="-14.5" y="-11.5" width="29" height="23"/><path d="M-1.5 11.5V1.5H14.5M-1.5 6.5H14.5M6.5 1.5V11.5"/></g></g><rect x="1669.7" y="76.4" width="367.2" height="196.6" fill="rgba(0,0,0,0.18)" rx="5"/><path d="M1668.7 271.0V80.4Q1668.7 74.4 1674.7 74.4H2029.9Q2035.9 74.4 2035.9 80.4V271.0Z" fill="#ffffff" stroke="#cfcfcf" stroke-width="1"/><path d="M1669.2 109.9V80.4Q1669.2 74.9 1674.7 74.9H2029.9Q2035.4 74.9 2035.4 80.4V109.9Z" fill="#eeeeee"/><rect x="1668.7" y="109.2" width="367.2" height="1.5" fill="#d4d4d4"/><text x="1677.3" y="96.5" font-family="Liberation Sans" font-size="18" fill="#333">Layers and Objects</text><rect x="1842" y="110.5" width="193.5" height="37.5" fill="#dedede"/><path d="M1842.5 110.5V148M1933.5 110.5V148" stroke="#cfcfcf" stroke-width="1"/><text x="1686.4" y="134.5" font-family="Liberation Sans" font-weight="bold" font-size="18" fill="#3b67a8">Tout les calques</text><text x="1858.6" y="134.5" font-family="Liberation Sans" font-size="18" fill="#333">Copper</text><svg x="1933.5" y="110" width="102" height="38"><text x="15.7" y="24.5" font-family="Liberation Sans" font-size="18" fill="#333">Non-Copper</text></svg><rect x="1719" y="188.5" width="312" height="72.5" fill="#dcdcdc"/><rect x="1670.7" y="152" width="48.3" height="36.5" fill="#ff0000"/><rect x="1670.7" y="188.5" width="48.3" height="36.2" fill="#0000ff"/><rect x="1670.7" y="224.7" width="48.3" height="36.3" fill="#ffcc00"/><defs><linearGradient id="pg" x1="0" x2="1" y1="0" y2="0"><stop offset="0" stop-color="#f2d200"/><stop offset="1" stop-color="#e88a00"/></linearGradient></defs><g transform="translate(1695 169.5) rotate(45)"><rect x="-4.6" y="-16" width="9.2" height="6.5" rx="1.5" fill="#e07a7a"/><rect x="-4.6" y="-10" width="9.2" height="1.8" fill="#7a5030"/><rect x="-4.6" y="-8.4" width="9.2" height="14.6" fill="url(#pg)"/><path d="M-4.6 6.2L4.6 6.2L0 16Z" fill="#fbeec0"/><path d="M-1.6 12.6L1.6 12.6L0 16Z" fill="#333"/></g><g transform="translate(1743.4 170)"><path d="M-12 0Q0 -11 12 0Q0 11 -12 0Z" fill="#f0f0f0" stroke="#777" stroke-width="1.8"/><circle r="4.6" fill="#555"/><circle r="2.5" fill="#6b6f90"/></g><g transform="translate(1743.4 206.2)"><path d="M-12 0Q0 -11 12 0Q0 11 -12 0Z" fill="#f0f0f0" stroke="#777" stroke-width="1.8"/><circle r="4.6" fill="#555"/><circle r="2.5" fill="#6b6f90"/></g><g transform="translate(1743.4 242.4)"><path d="M-12 0Q0 -11 12 0Q0 11 -12 0Z" fill="#f0f0f0" stroke="#777" stroke-width="1.8"/><circle r="4.6" fill="#555"/><circle r="2.5" fill="#6b6f90"/></g><g font-family="Liberation Sans" font-size="18" fill="#333"><text x="1768" y="176.5">Côté Composants</text><text x="1768" y="212.9">Côté Cuivre</text><text x="1768" y="249.1">Sérigraphie côté Composants</text></g><g transform="translate(1964 91.5) rotate(45)" fill="#555"><path d="M-4.5 -9H4.5L3.2 -2.5L6 1H-6L-3.2 -2.5Z"/><path d="M0 1V10" stroke="#555" stroke-width="1.8"/></g><g transform="translate(1991.8 91.7)" fill="none" stroke="#555"><circle r="8.3" stroke-width="3" stroke-dasharray="3 3.52"/><circle r="6.6" stroke-width="1.6"/><circle r="2.8" stroke-width="1.6"/></g><path d="M2010.7 90H2028" stroke="#555" stroke-width="1.8"/><path d="M2014 268L2030 252M2020 268L2030 258M2026 268L2030 264" stroke="#999" stroke-width="1.2"/>
</svg>
</body></html>
